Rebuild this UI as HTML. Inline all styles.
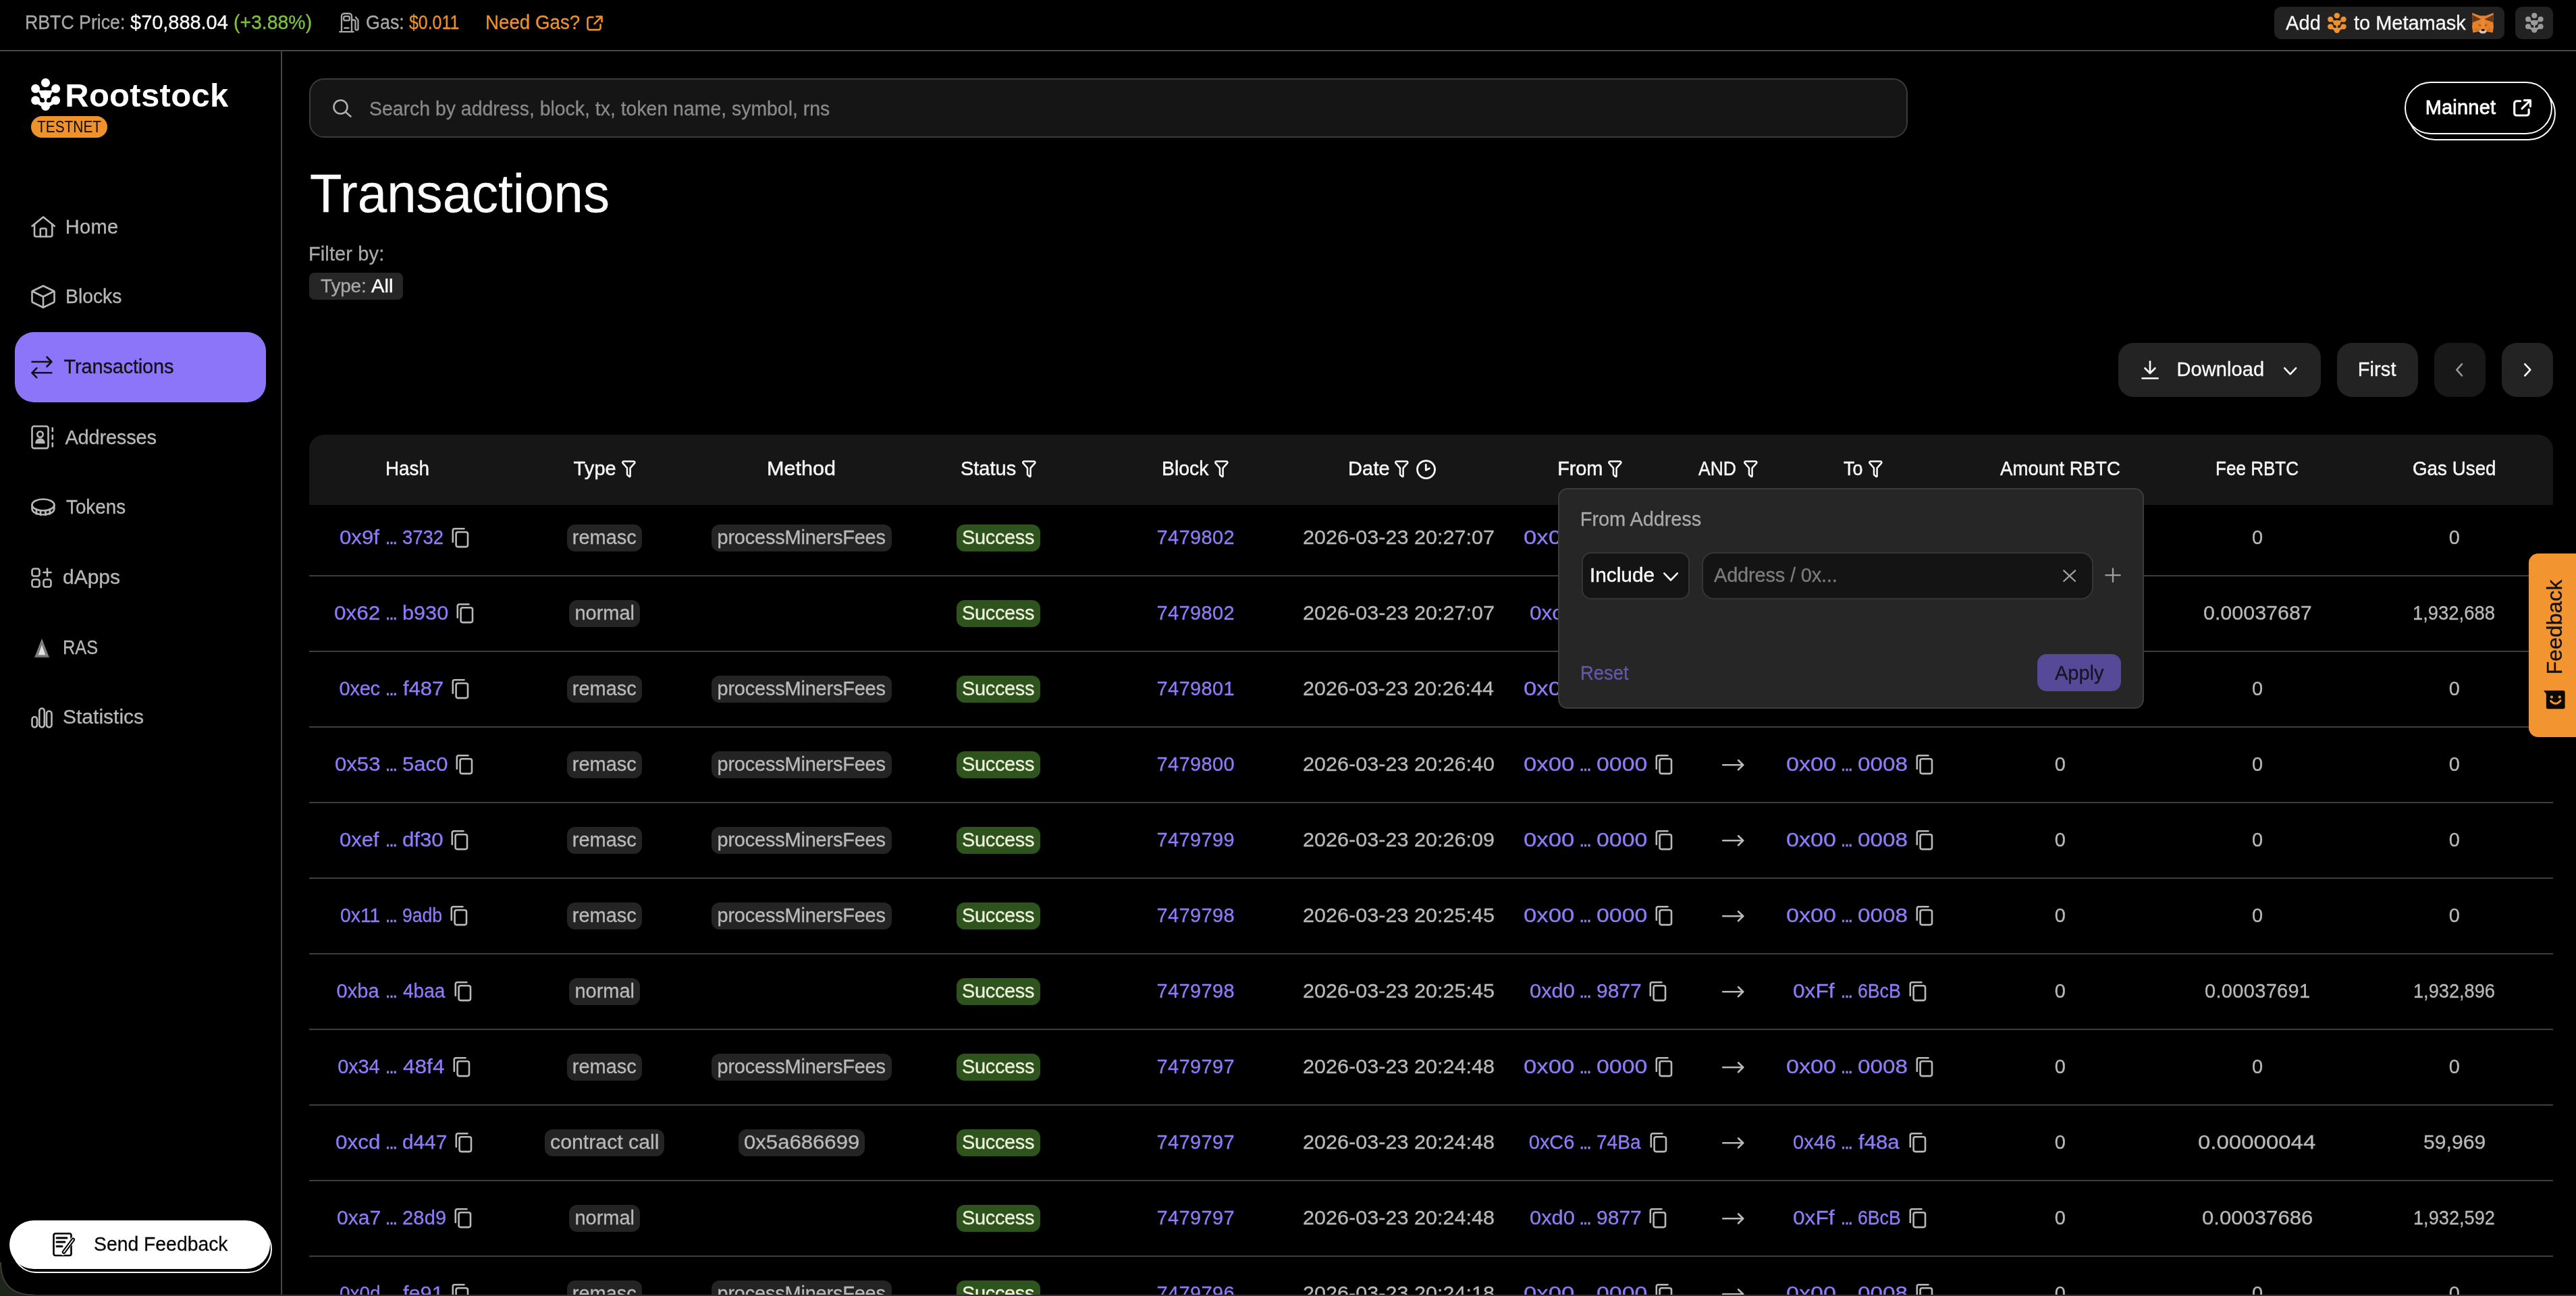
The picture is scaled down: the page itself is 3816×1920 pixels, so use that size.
<!DOCTYPE html>
<html><head><meta charset="utf-8"><title>Transactions</title>
<style>
html,body{margin:0;padding:0;background:#000;width:3816px;height:1920px;overflow:hidden}
body{position:relative;font-family:"Liberation Sans",sans-serif}
#root{position:absolute;left:0;top:0;width:3816px;height:1920px;will-change:transform}
.t{position:absolute;white-space:pre;-webkit-text-stroke:0.3px currentColor}
svg{overflow:visible}
</style></head><body><div id="root">
<div style="position:absolute;left:0px;top:74px;width:3816px;height:2px;background:#464646;border-radius:0px;"></div>
<div class="t" style="left:36.96px;top:19.10px;font-size:29px;line-height:29px;color:#a9a9a9;font-weight:400;letter-spacing:0.000px;transform:scaleX(0.9206);transform-origin:0 0;">RBTC Price:</div>
<div class="t" style="left:193.10px;top:19.10px;font-size:29px;line-height:29px;color:#f7f7f7;font-weight:400;letter-spacing:-0.046px;">$70,888.04</div>
<div class="t" style="left:345.52px;top:19.10px;font-size:29px;line-height:29px;color:#7cc23e;font-weight:400;letter-spacing:0.000px;transform:scaleX(0.9800);transform-origin:0 0;">(+3.88%)</div>
<svg style="position:absolute;left:501.7px;top:19px;" width="30.599999999999966" height="29.5" viewBox="0 0 30.6 29.5" preserveAspectRatio="none"><g fill="none" stroke="#a9a9a9" stroke-width="2.3" stroke-linecap="round" stroke-linejoin="round">
<path d="M4 27.5 V5 a4 4 0 0 1 4 -4 H15 a4 4 0 0 1 4 4 V27.5"/><path d="M1.2 28.2 H21.5"/>
<rect x="7.2" y="5.2" width="8.6" height="6.2" rx="2"/><path d="M8.3 22.5 H14.5"/>
<path d="M19 10.5 H22 a2.5 2.5 0 0 1 2.5 2.5 V23.5 a2 2 0 0 0 4 0 V11 L25 6.5"/>
</g></svg>
<div class="t" style="left:541.57px;top:19.10px;font-size:29px;line-height:29px;color:#a9a9a9;font-weight:400;letter-spacing:0.000px;transform:scaleX(0.9281);transform-origin:0 0;">Gas:</div>
<div class="t" style="left:606.20px;top:19.10px;font-size:29px;line-height:29px;color:#ef9129;font-weight:400;letter-spacing:0.000px;transform:scaleX(0.8581);transform-origin:0 0;">$0.011</div>
<div class="t" style="left:719.39px;top:19.10px;font-size:29px;line-height:29px;color:#ef9129;font-weight:400;letter-spacing:0.000px;transform:scaleX(0.9559);transform-origin:0 0;">Need Gas?</div>
<svg style="position:absolute;left:869px;top:23px;" width="24" height="22.6" viewBox="0 0 24 23" preserveAspectRatio="none"><g fill="none" stroke="#ef9129" stroke-width="2.6" stroke-linecap="round" stroke-linejoin="round"><path d="M9.5 2.5 H4.5 a3 3 0 0 0 -3 3 V18.5 a3 3 0 0 0 3 3 H17.5 a3 3 0 0 0 3 -3 V13.5"/><path d="M14.5 1.5 H22.5 V9.5"/><path d="M22 2 L11.5 12.5"/></g></svg>
<div style="position:absolute;left:3369px;top:10px;width:340.6999999999998px;height:47.9px;background:#222222;border-radius:10px;"></div>
<div class="t" style="left:3386.00px;top:19.50px;font-size:29px;line-height:29px;color:#f7f7f7;font-weight:400;letter-spacing:0.164px;">Add</div>
<svg style="position:absolute;left:3448px;top:19px;" width="28" height="30" viewBox="0 0 43.5 48" preserveAspectRatio="none"><g fill="#f0922c">
<circle cx="21.5" cy="6.6" r="6.6"/><circle cx="6.6" cy="15.3" r="6.5"/><circle cx="36.6" cy="15.3" r="6.5"/>
<circle cx="6.6" cy="32.7" r="6.5"/><circle cx="36.6" cy="32.7" r="6.5"/><circle cx="21.5" cy="41.3" r="6.6"/>
<path d="M10.5 17.6 Q16 18.6 21.5 17.4 Q27 18.6 32.5 17.6 L33 19 Q29 23 28.8 27.5 Q27 30 24.5 31 L21.5 34 L18.5 31 Q16 30 14.2 27.5 Q14 23 10 19 Z"/>
<rect x="20" y="30" width="3" height="8"/>
<path d="M6.6 33 L21.5 41.3 L36.6 33" fill="none" stroke="#f0922c" stroke-width="6.5" stroke-linejoin="round"/>
</g>
<circle cx="16.45" cy="32.4" r="3.3" fill="#222222"/><circle cx="26.6" cy="32.4" r="3.3" fill="#222222"/></svg>
<div class="t" style="left:3487.00px;top:19.50px;font-size:29px;line-height:29px;color:#f7f7f7;font-weight:400;letter-spacing:-0.020px;">to Metamask</div>
<svg style="position:absolute;left:3662px;top:19px;" width="32" height="30" viewBox="0 0 32 30" preserveAspectRatio="none">
<polygon points="0.2,0 11.5,4.3 20.5,4.3 31.8,0 31.3,13.7 32,21 30.5,29.5 22,27.5 16,30.5 10,27.5 1.5,29.5 0,21 0.7,13.7" fill="#e6812b"/>
<polygon points="0.2,2.8 13.1,9.6 1.1,13.9" fill="#683a1b"/>
<polygon points="31.8,2.8 18.4,9.6 30.9,13.9" fill="#683a1b"/>
<polygon points="13,9.6 19,9.6 18.5,24 13.5,24" fill="#ec8a33"/>
<polygon points="7,16 12,17 12.5,20" fill="#c96a25"/><polygon points="25,16 20,17 19.5,20" fill="#c96a25"/>
<polygon points="6,22 11,26 10,27.5 3,26" fill="#d27328"/><polygon points="26,22 21,26 22,27.5 29,26" fill="#d27328"/>
<polygon points="10,27.5 13.2,25 18.8,25 22,27.5 19,30.5 13,30.5" fill="#d8c8b6"/>
<polygon points="13.9,24.1 18.5,24.1 18.5,26.9 13.9,26.9" fill="#111"/>
<ellipse cx="11.8" cy="18.6" rx="1.3" ry="0.8" fill="#3a4a6a"/><ellipse cx="20.2" cy="18.6" rx="1.3" ry="0.8" fill="#3a4a6a"/>
</svg>
<div style="position:absolute;left:3726px;top:10px;width:55.69999999999982px;height:47.9px;background:#222222;border-radius:10px;"></div>
<svg style="position:absolute;left:3740.5px;top:19px;" width="26.90000000000009" height="29.6" viewBox="0 0 43.5 48" preserveAspectRatio="none"><g fill="#9a9a9a">
<circle cx="21.5" cy="6.6" r="6.6"/><circle cx="6.6" cy="15.3" r="6.5"/><circle cx="36.6" cy="15.3" r="6.5"/>
<circle cx="6.6" cy="32.7" r="6.5"/><circle cx="36.6" cy="32.7" r="6.5"/><circle cx="21.5" cy="41.3" r="6.6"/>
<path d="M10.5 17.6 Q16 18.6 21.5 17.4 Q27 18.6 32.5 17.6 L33 19 Q29 23 28.8 27.5 Q27 30 24.5 31 L21.5 34 L18.5 31 Q16 30 14.2 27.5 Q14 23 10 19 Z"/>
<rect x="20" y="30" width="3" height="8"/>
<path d="M6.6 33 L21.5 41.3 L36.6 33" fill="none" stroke="#9a9a9a" stroke-width="6.5" stroke-linejoin="round"/>
</g>
<circle cx="16.45" cy="32.4" r="3.3" fill="#222222"/><circle cx="26.6" cy="32.4" r="3.3" fill="#222222"/></svg>
<div style="position:absolute;left:416px;top:76px;width:2px;height:1844px;background:#464646;border-radius:0px;"></div>
<svg style="position:absolute;left:46px;top:116px;" width="43.5" height="48" viewBox="0 0 43.5 48" preserveAspectRatio="none"><g fill="#ffffff">
<circle cx="21.5" cy="6.6" r="6.6"/><circle cx="6.6" cy="15.3" r="6.5"/><circle cx="36.6" cy="15.3" r="6.5"/>
<circle cx="6.6" cy="32.7" r="6.5"/><circle cx="36.6" cy="32.7" r="6.5"/><circle cx="21.5" cy="41.3" r="6.6"/>
<path d="M10.5 17.6 Q16 18.6 21.5 17.4 Q27 18.6 32.5 17.6 L33 19 Q29 23 28.8 27.5 Q27 30 24.5 31 L21.5 34 L18.5 31 Q16 30 14.2 27.5 Q14 23 10 19 Z"/>
<rect x="20" y="30" width="3" height="8"/>
<path d="M6.6 33 L21.5 41.3 L36.6 33" fill="none" stroke="#ffffff" stroke-width="6.5" stroke-linejoin="round"/>
</g>
<circle cx="16.45" cy="32.4" r="3.3" fill="#000000"/><circle cx="26.6" cy="32.4" r="3.3" fill="#000000"/></svg>
<div class="t" style="left:96.20px;top:116.90px;font-size:49px;line-height:49px;color:#ffffff;font-weight:700;letter-spacing:0.310px;-webkit-text-stroke:0;">Rootstock</div>
<div style="position:absolute;left:46px;top:172px;width:112.69999999999999px;height:31.80000000000001px;background:#f0922c;border-radius:16px;"></div>
<div class="t" style="left:55.00px;top:175.80px;font-size:24px;line-height:24px;color:#0a0a0a;font-weight:400;letter-spacing:0.000px;transform:scaleX(0.8698);transform-origin:0 0;-webkit-text-stroke:0;">TESTNET</div>
<svg style="position:absolute;left:45.7px;top:319.8px;" width="36.3" height="32.099999999999966" viewBox="0 0 36.3 32.1" preserveAspectRatio="none"><g fill="none" stroke="#b8b8b8" stroke-width="2.6" stroke-linecap="round" stroke-linejoin="round"><path d="M1.5 15 L18.1 1.5 L34.8 15"/><path d="M5 12 V28 a2.5 2.5 0 0 0 2.5 2.5 H28.8 a2.5 2.5 0 0 0 2.5 -2.5 V12"/><path d="M13.8 30.5 V20 a1.5 1.5 0 0 1 1.5 -1.5 H21 a1.5 1.5 0 0 1 1.5 1.5 V30.5"/></g></svg>
<div class="t" style="left:96.80px;top:321.70px;font-size:29px;line-height:29px;color:#b8b8b8;font-weight:400;letter-spacing:0.324px;">Home</div>
<svg style="position:absolute;left:46px;top:422px;" width="36" height="35" viewBox="0 0 36.0 35.0" preserveAspectRatio="none"><g fill="none" stroke="#b8b8b8" stroke-width="2.6" stroke-linecap="round" stroke-linejoin="round"><path d="M18 1.5 L33.5 9 a2 2 0 0 1 1 1.8 V24.2 a2 2 0 0 1 -1 1.8 L18 33.5 L2.5 26 a2 2 0 0 1 -1 -1.8 V10.8 a2 2 0 0 1 1 -1.8 Z"/><path d="M2 9.5 L18 17.5 L34 9.5"/><path d="M18 17.5 V33.5"/></g></svg>
<div class="t" style="left:97.05px;top:425.40px;font-size:29px;line-height:29px;color:#b8b8b8;font-weight:400;letter-spacing:0.000px;transform:scaleX(0.9769);transform-origin:0 0;">Blocks</div>
<div style="position:absolute;left:22.2px;top:492px;width:371.6px;height:103.79999999999995px;background:#8c75f8;border-radius:28px;"></div>
<svg style="position:absolute;left:46px;top:526.7px;" width="31.799999999999997" height="34.299999999999955" viewBox="0 0 31.8 34.3" preserveAspectRatio="none"><g fill="none" stroke="#111111" stroke-width="2.6" stroke-linecap="round" stroke-linejoin="round"><path d="M1.5 9 H30"/><path d="M23.5 2 L30.3 9 L23.5 16"/><path d="M30.3 25.3 H1.8"/><path d="M8.3 18.3 L1.5 25.3 L8.3 32.3"/></g></svg>
<div class="t" style="left:94.60px;top:529.00px;font-size:29px;line-height:29px;color:#111111;font-weight:400;letter-spacing:-0.185px;">Transactions</div>
<svg style="position:absolute;left:46px;top:630px;" width="34" height="35.60000000000002" viewBox="0 0 34.0 35.6" preserveAspectRatio="none"><g fill="none" stroke="#b8b8b8" stroke-width="2.6" stroke-linecap="round" stroke-linejoin="round"><rect x="1.5" y="1.5" width="24" height="32.6" rx="3"/><circle cx="13.5" cy="13.5" r="4.2"/><path d="M7.5 26 a6 5.5 0 0 1 12 0 Z" fill="#b8b8b8"/><path d="M31.8 4 V9"/><path d="M31.8 15 V20.5"/><path d="M31.8 26.5 V31.5"/></g></svg>
<div class="t" style="left:96.40px;top:633.80px;font-size:29px;line-height:29px;color:#b8b8b8;font-weight:400;letter-spacing:-0.189px;">Addresses</div>
<svg style="position:absolute;left:46px;top:738px;" width="35.8" height="27" viewBox="0 0 35.8 27.0" preserveAspectRatio="none"><g fill="none" stroke="#b8b8b8" stroke-width="2.6" stroke-linecap="round" stroke-linejoin="round"><ellipse cx="17.9" cy="10" rx="16.4" ry="8.5"/><path d="M1.5 10 V16 a16.4 8.5 0 0 0 32.8 0 V10"/><path d="M8 18 V23.5"/><path d="M14 19.3 V25"/><path d="M21.5 19.3 V25"/><path d="M27.8 18 V23.5"/></g></svg>
<div class="t" style="left:98.30px;top:737.00px;font-size:29px;line-height:29px;color:#b8b8b8;font-weight:400;letter-spacing:0.000px;transform:scaleX(0.9586);transform-origin:0 0;">Tokens</div>
<svg style="position:absolute;left:46px;top:841px;" width="31" height="30" viewBox="0 0 31.0 30.0" preserveAspectRatio="none"><g fill="none" stroke="#b8b8b8" stroke-width="2.6" stroke-linecap="round" stroke-linejoin="round"><rect x="1.5" y="1.5" width="11" height="11" rx="3"/><rect x="1.5" y="17.5" width="11" height="11" rx="3"/><rect x="18.5" y="17.5" width="11" height="11" rx="3"/><path d="M24 1.5 V12.5"/><path d="M18.5 7 H29.5"/></g></svg>
<div class="t" style="left:93.47px;top:841.30px;font-size:29px;line-height:29px;color:#b8b8b8;font-weight:400;letter-spacing:0.000px;transform:scaleX(1.0343);transform-origin:0 0;">dApps</div>
<svg style="position:absolute;left:51px;top:946px;" width="22" height="28" viewBox="0 0 22 28" preserveAspectRatio="none"><polygon points="11,0 22,28 0,28" fill="#6e6e6e"/><polygon points="11,9 16.5,24.5 5.5,24.5" fill="#e0e0e0"/><polygon points="11,3 19,25 3,25" fill="none" stroke="#8a8a8a" stroke-width="1.2"/></svg>
<div class="t" style="left:92.75px;top:945.00px;font-size:29px;line-height:29px;color:#b8b8b8;font-weight:400;letter-spacing:0.000px;transform:scaleX(0.8746);transform-origin:0 0;">RAS</div>
<svg style="position:absolute;left:46px;top:1048px;" width="32" height="31" viewBox="0 0 32.0 31.0" preserveAspectRatio="none"><g fill="none" stroke="#b8b8b8" stroke-width="2.6" stroke-linecap="round" stroke-linejoin="round"><rect x="1.5" y="14" width="7.5" height="15.5" rx="3.7"/><rect x="12.3" y="1.5" width="7.5" height="28" rx="3.7"/><rect x="23" y="5.5" width="7.5" height="24" rx="3.7"/></g></svg>
<div class="t" style="left:93.47px;top:1048.40px;font-size:29px;line-height:29px;color:#b8b8b8;font-weight:400;letter-spacing:0.000px;transform:scaleX(1.0347);transform-origin:0 0;">Statistics</div>
<div style="position:absolute;left:17.5px;top:1815px;width:385px;height:71px;border-radius:36px;background:#000;border:2px solid #fff;box-sizing:border-box"></div>
<div style="position:absolute;left:13.9px;top:1807.7px;width:386.40000000000003px;height:72.09999999999991px;background:#ffffff;border-radius:36px;"></div>
<svg style="position:absolute;left:78px;top:1826px;" width="32" height="35.5" viewBox="0 0 32 35.5" preserveAspectRatio="none"><g fill="none" stroke="#000" stroke-width="2.6" stroke-linecap="round" stroke-linejoin="round"><rect x="1.5" y="1.5" width="26" height="32.5" rx="2.5"/></g><g stroke="#000" stroke-width="3" stroke-linecap="round"><path d="M6 8 H21"/><path d="M6 14 H18"/><path d="M6 20.5 H14"/></g><path d="M30.5 10 L15 30" stroke="#fff" stroke-width="7" stroke-linecap="round"/><path d="M30.3 10.5 L16.5 29" stroke="#000" stroke-width="5.5" stroke-linecap="round"/><path d="M30.3 10.5 L16.5 29" stroke="#fff" stroke-width="1.6" stroke-linecap="round"/></svg>
<div class="t" style="left:139.02px;top:1829.00px;font-size:29px;line-height:29px;color:#0a0a0a;font-weight:400;letter-spacing:0.000px;transform:scaleX(0.9771);transform-origin:0 0;">Send Feedback</div>
<div style="position:absolute;left:458px;top:116.2px;width:2367.7px;height:87.5px;border-radius:22px;background:#151515;border:2px solid #3a3a3a;box-sizing:border-box"></div>
<svg style="position:absolute;left:493.4px;top:146.6px;" width="28.0" height="27.0" viewBox="0 0 28 27" preserveAspectRatio="none"><g fill="none" stroke="#b0b0b0" stroke-width="2.6" stroke-linecap="round"><circle cx="11.5" cy="11.5" r="10"/><path d="M19 19 L26.5 25.5"/></g></svg>
<div class="t" style="left:547.02px;top:146.80px;font-size:29px;line-height:29px;color:#8a8a8a;font-weight:400;letter-spacing:0.000px;transform:scaleX(0.9798);transform-origin:0 0;">Search by address, block, tx, token name, symbol, rns</div>
<div style="position:absolute;left:3567px;top:128px;width:218.6px;height:79.7px;border-radius:40px;border:2.5px solid #fff;box-sizing:border-box"></div>
<div style="position:absolute;left:3562.4px;top:120.8px;width:218.5px;height:78.5px;border-radius:40px;background:#000;border:2.5px solid #fff;box-sizing:border-box"></div>
<div class="t" style="left:3592.70px;top:145.40px;font-size:29px;line-height:29px;color:#ffffff;font-weight:400;letter-spacing:0.198px;-webkit-text-stroke:0.8px currentColor;">Mainnet</div>
<svg style="position:absolute;left:3722.7px;top:147px;" width="27.100000000000364" height="25.69999999999999" viewBox="0 0 24 23" preserveAspectRatio="none"><g fill="none" stroke="#ffffff" stroke-width="2.8" stroke-linecap="round" stroke-linejoin="round"><path d="M9.5 2.5 H4.5 a3 3 0 0 0 -3 3 V18.5 a3 3 0 0 0 3 3 H17.5 a3 3 0 0 0 3 -3 V13.5"/><path d="M14.5 1.5 H22.5 V9.5"/><path d="M22 2 L11.5 12.5"/></g></svg>
<div class="t" style="left:458.52px;top:247.30px;font-size:80px;line-height:80px;color:#fafafa;font-weight:400;letter-spacing:0.000px;transform:scaleX(0.9757);transform-origin:0 0;">Transactions</div>
<div class="t" style="left:456.90px;top:361.70px;font-size:29px;line-height:29px;color:#a9a9a9;font-weight:400;letter-spacing:0.130px;">Filter by:</div>
<div style="position:absolute;left:458px;top:404px;width:138.70000000000005px;height:39.80000000000001px;background:#262626;border-radius:8px;"></div>
<div class="t" style="left:475.00px;top:409.90px;font-size:28px;line-height:28px;color:#a9a9a9;font-weight:400;letter-spacing:-0.176px;">Type:</div>
<div class="t" style="left:549.50px;top:409.90px;font-size:28px;line-height:28px;color:#ffffff;font-weight:400;letter-spacing:0.000px;transform:scaleX(1.0403);transform-origin:0 0;-webkit-text-stroke:0.45px currentColor;">All</div>
<div style="position:absolute;left:3138px;top:507.8px;width:299.6999999999998px;height:79.99999999999994px;background:#232323;border-radius:22px;"></div>
<svg style="position:absolute;left:3171.7px;top:534px;" width="26.100000000000364" height="28" viewBox="0 0 26.1 28" preserveAspectRatio="none"><g fill="none" stroke="#fff" stroke-width="2.6" stroke-linecap="round" stroke-linejoin="round"><path d="M13 1.5 V19"/><path d="M5.5 11.5 L13 19 L20.5 11.5"/><path d="M1.5 26.5 H24.6"/></g></svg>
<div class="t" style="left:3224.50px;top:533.00px;font-size:29px;line-height:29px;color:#fafafa;font-weight:400;letter-spacing:0.080px;">Download</div>
<svg style="position:absolute;left:3383px;top:544px;" width="19.40000000000009" height="11.600000000000023" viewBox="0 0 19.4 11.6" preserveAspectRatio="none"><path d="M1.3 1.3 L9.7 10.3 L18.1 1.3" fill="none" stroke="#fafafa" stroke-width="2.6" stroke-linecap="round" stroke-linejoin="round"/></svg>
<div style="position:absolute;left:3461.9px;top:507.8px;width:119.79999999999973px;height:79.99999999999994px;background:#232323;border-radius:22px;"></div>
<div class="t" style="left:3492.70px;top:533.00px;font-size:29px;line-height:29px;color:#fafafa;font-weight:400;letter-spacing:0.096px;">First</div>
<div style="position:absolute;left:3605.8px;top:507.8px;width:75.89999999999964px;height:79.99999999999994px;background:#181818;border-radius:22px;"></div>
<svg style="position:absolute;left:3637.8px;top:538px;" width="10.199999999999818" height="19.799999999999955" viewBox="0 0 10.2 19.8" preserveAspectRatio="none"><path d="M9 1.3 L1.3 9.9 L9 18.5" fill="none" stroke="#9a9a9a" stroke-width="2.6" stroke-linecap="round" stroke-linejoin="round"/></svg>
<div style="position:absolute;left:3705.9px;top:507.8px;width:75.90000000000009px;height:79.99999999999994px;background:#232323;border-radius:22px;"></div>
<svg style="position:absolute;left:3739px;top:538px;" width="10.800000000000182" height="19.799999999999955" viewBox="0 0 10.8 19.8" preserveAspectRatio="none"><path d="M1.3 1.3 L9.3 9.9 L1.3 18.5" fill="none" stroke="#fafafa" stroke-width="2.6" stroke-linecap="round" stroke-linejoin="round"/></svg>
<div style="position:absolute;left:458px;top:643.7px;width:3323.6px;height:104px;border-radius:22px 22px 0 0;background:#161616"></div>
<div class="t" style="left:571.48px;top:680.00px;font-size:29px;line-height:29px;color:#f7f7f7;font-weight:400;letter-spacing:0.000px;transform:scaleX(0.9586);transform-origin:0 0;-webkit-text-stroke:0.45px currentColor;">Hash</div>
<div class="t" style="left:849.60px;top:680.00px;font-size:29px;line-height:29px;color:#f7f7f7;font-weight:400;letter-spacing:0.086px;-webkit-text-stroke:0.45px currentColor;">Type</div>
<svg style="position:absolute;left:921.1px;top:682px;" width="20.700000000000045" height="26" viewBox="0 0 20.7 26" preserveAspectRatio="none"><path d="M2.8 1.5 H17.9 a1.6 1.6 0 0 1 1.2 2.6 L12.6 11.3 V23.5 a0.8 0.8 0 0 1 -1.3 0.6 L8.6 21.8 a1.6 1.6 0 0 1 -0.6 -1.2 V11.3 L1.6 4.1 a1.6 1.6 0 0 1 1.2 -2.6 Z" fill="none" stroke="#fafafa" stroke-width="2.5" stroke-linejoin="round"/></svg>
<div class="t" style="left:1136.19px;top:680.00px;font-size:29px;line-height:29px;color:#f7f7f7;font-weight:400;letter-spacing:0.000px;transform:scaleX(1.0545);transform-origin:0 0;-webkit-text-stroke:0.45px currentColor;">Method</div>
<div class="t" style="left:1422.90px;top:680.00px;font-size:29px;line-height:29px;color:#f7f7f7;font-weight:400;letter-spacing:0.037px;-webkit-text-stroke:0.45px currentColor;">Status</div>
<svg style="position:absolute;left:1513.5px;top:682px;" width="20.700000000000045" height="26" viewBox="0 0 20.7 26" preserveAspectRatio="none"><path d="M2.8 1.5 H17.9 a1.6 1.6 0 0 1 1.2 2.6 L12.6 11.3 V23.5 a0.8 0.8 0 0 1 -1.3 0.6 L8.6 21.8 a1.6 1.6 0 0 1 -0.6 -1.2 V11.3 L1.6 4.1 a1.6 1.6 0 0 1 1.2 -2.6 Z" fill="none" stroke="#fafafa" stroke-width="2.5" stroke-linejoin="round"/></svg>
<div class="t" style="left:1720.64px;top:680.00px;font-size:29px;line-height:29px;color:#f7f7f7;font-weight:400;letter-spacing:0.000px;transform:scaleX(0.9796);transform-origin:0 0;-webkit-text-stroke:0.45px currentColor;">Block</div>
<svg style="position:absolute;left:1799.3px;top:682px;" width="20.700000000000045" height="26" viewBox="0 0 20.7 26" preserveAspectRatio="none"><path d="M2.8 1.5 H17.9 a1.6 1.6 0 0 1 1.2 2.6 L12.6 11.3 V23.5 a0.8 0.8 0 0 1 -1.3 0.6 L8.6 21.8 a1.6 1.6 0 0 1 -0.6 -1.2 V11.3 L1.6 4.1 a1.6 1.6 0 0 1 1.2 -2.6 Z" fill="none" stroke="#fafafa" stroke-width="2.5" stroke-linejoin="round"/></svg>
<div class="t" style="left:1997.00px;top:680.00px;font-size:29px;line-height:29px;color:#f7f7f7;font-weight:400;letter-spacing:0.157px;-webkit-text-stroke:0.45px currentColor;">Date</div>
<svg style="position:absolute;left:2066px;top:682px;" width="20.699999999999818" height="26" viewBox="0 0 20.7 26" preserveAspectRatio="none"><path d="M2.8 1.5 H17.9 a1.6 1.6 0 0 1 1.2 2.6 L12.6 11.3 V23.5 a0.8 0.8 0 0 1 -1.3 0.6 L8.6 21.8 a1.6 1.6 0 0 1 -0.6 -1.2 V11.3 L1.6 4.1 a1.6 1.6 0 0 1 1.2 -2.6 Z" fill="none" stroke="#fafafa" stroke-width="2.5" stroke-linejoin="round"/></svg>
<svg style="position:absolute;left:2098.3px;top:680.5px;" width="29.09999999999991" height="29.100000000000023" viewBox="0 0 29.1 29.1" preserveAspectRatio="none"><g fill="none" stroke="#fafafa" stroke-width="2.8" stroke-linecap="round" stroke-linejoin="round"><circle cx="14.55" cy="14.55" r="13"/><path d="M14.3 7.5 V15.5 L19.5 13"/></g></svg>
<div class="t" style="left:2307.20px;top:680.00px;font-size:29px;line-height:29px;color:#f7f7f7;font-weight:400;letter-spacing:-0.167px;-webkit-text-stroke:0.45px currentColor;">From</div>
<svg style="position:absolute;left:2382px;top:682px;" width="20.699999999999818" height="26" viewBox="0 0 20.7 26" preserveAspectRatio="none"><path d="M2.8 1.5 H17.9 a1.6 1.6 0 0 1 1.2 2.6 L12.6 11.3 V23.5 a0.8 0.8 0 0 1 -1.3 0.6 L8.6 21.8 a1.6 1.6 0 0 1 -0.6 -1.2 V11.3 L1.6 4.1 a1.6 1.6 0 0 1 1.2 -2.6 Z" fill="none" stroke="#fafafa" stroke-width="2.5" stroke-linejoin="round"/></svg>
<div class="t" style="left:2515.50px;top:680.00px;font-size:29px;line-height:29px;color:#f7f7f7;font-weight:400;letter-spacing:0.000px;transform:scaleX(0.9140);transform-origin:0 0;-webkit-text-stroke:0.45px currentColor;">AND</div>
<svg style="position:absolute;left:2583px;top:682px;" width="20.699999999999818" height="26" viewBox="0 0 20.7 26" preserveAspectRatio="none"><path d="M2.8 1.5 H17.9 a1.6 1.6 0 0 1 1.2 2.6 L12.6 11.3 V23.5 a0.8 0.8 0 0 1 -1.3 0.6 L8.6 21.8 a1.6 1.6 0 0 1 -0.6 -1.2 V11.3 L1.6 4.1 a1.6 1.6 0 0 1 1.2 -2.6 Z" fill="none" stroke="#fafafa" stroke-width="2.5" stroke-linejoin="round"/></svg>
<div class="t" style="left:2731.00px;top:680.00px;font-size:29px;line-height:29px;color:#f7f7f7;font-weight:400;letter-spacing:0.000px;transform:scaleX(0.9254);transform-origin:0 0;-webkit-text-stroke:0.45px currentColor;">To</div>
<svg style="position:absolute;left:2768px;top:682px;" width="20.699999999999818" height="26" viewBox="0 0 20.7 26" preserveAspectRatio="none"><path d="M2.8 1.5 H17.9 a1.6 1.6 0 0 1 1.2 2.6 L12.6 11.3 V23.5 a0.8 0.8 0 0 1 -1.3 0.6 L8.6 21.8 a1.6 1.6 0 0 1 -0.6 -1.2 V11.3 L1.6 4.1 a1.6 1.6 0 0 1 1.2 -2.6 Z" fill="none" stroke="#fafafa" stroke-width="2.5" stroke-linejoin="round"/></svg>
<div class="t" style="left:2963.00px;top:680.00px;font-size:29px;line-height:29px;color:#f7f7f7;font-weight:400;letter-spacing:0.000px;transform:scaleX(0.9516);transform-origin:0 0;-webkit-text-stroke:0.45px currentColor;">Amount RBTC</div>
<div class="t" style="left:3281.60px;top:680.00px;font-size:29px;line-height:29px;color:#f7f7f7;font-weight:400;letter-spacing:0.000px;transform:scaleX(0.8983);transform-origin:0 0;-webkit-text-stroke:0.45px currentColor;">Fee RBTC</div>
<div class="t" style="left:3573.94px;top:680.00px;font-size:29px;line-height:29px;color:#f7f7f7;font-weight:400;letter-spacing:0.000px;transform:scaleX(0.9581);transform-origin:0 0;-webkit-text-stroke:0.45px currentColor;">Gas Used</div>
<div style="position:absolute;left:458px;top:852px;width:3323.7px;height:2px;background:#3d3d3d;border-radius:0px;"></div>
<div class="t" style="left:502.52px;top:782.00px;font-size:29px;line-height:29px;color:#8f7cf8;font-weight:400;letter-spacing:0.000px;transform:scaleX(1.0766);transform-origin:0 0;">0x9f</div>
<div class="t" style="left:570.55px;top:782.00px;font-size:29px;line-height:29px;color:#8f7cf8;font-weight:400;letter-spacing:-2.707px;">...</div>
<div class="t" style="left:596.11px;top:782.00px;font-size:29px;line-height:29px;color:#8f7cf8;font-weight:400;letter-spacing:0.000px;transform:scaleX(0.9449);transform-origin:0 0;">3732</div>
<svg style="position:absolute;left:669.0px;top:782.1999999999999px;" width="25.399999999999977" height="29.399999999999977" viewBox="0 0 25.4 29.4" preserveAspectRatio="none"><g fill="none" stroke="#b9b9b9" stroke-width="2.6" stroke-linecap="round" stroke-linejoin="round"><path d="M1.8 21 V3.8 a2.5 2.5 0 0 1 2.5 -2.5 H18.5"/><rect x="6.6" y="6.3" width="17.4" height="21.8" rx="2.8"/></g></svg>
<div style="position:absolute;left:839.6px;top:776.9px;width:111.79999999999995px;height:40.0px;background:#242424;border-radius:12px;"></div>
<div class="t" style="left:847.80px;top:782.00px;font-size:29px;line-height:29px;color:#b9b9b9;font-weight:400;letter-spacing:-0.034px;">remasc</div>
<div style="position:absolute;left:1054.3px;top:776.9px;width:266.4000000000001px;height:40.0px;background:#242424;border-radius:12px;"></div>
<div class="t" style="left:1062.50px;top:782.00px;font-size:29px;line-height:29px;color:#b9b9b9;font-weight:400;letter-spacing:-0.220px;">processMinersFees</div>
<div style="position:absolute;left:1416.9px;top:776.9px;width:124.0px;height:40.0px;background:#2e531c;border-radius:12px;"></div>
<div class="t" style="left:1425.00px;top:782.00px;font-size:29px;line-height:29px;color:#eef2dd;font-weight:400;letter-spacing:-0.350px;">Success</div>
<div class="t" style="left:1713.60px;top:782.00px;font-size:29px;line-height:29px;color:#8f7cf8;font-weight:400;letter-spacing:0.338px;">7479802</div>
<div class="t" style="left:1930.05px;top:782.00px;font-size:29px;line-height:29px;color:#b9b9b9;font-weight:400;letter-spacing:0.000px;transform:scaleX(1.0548);transform-origin:0 0;">2026-03-23 20:27:07</div>
<div class="t" style="left:2257.25px;top:782.00px;font-size:29px;line-height:29px;color:#8f7cf8;font-weight:400;letter-spacing:0.000px;transform:scaleX(1.1982);transform-origin:0 0;">0x00</div>
<div class="t" style="left:2339.25px;top:782.00px;font-size:29px;line-height:29px;color:#8f7cf8;font-weight:400;letter-spacing:-2.707px;">...</div>
<div class="t" style="left:2364.58px;top:782.00px;font-size:29px;line-height:29px;color:#8f7cf8;font-weight:400;letter-spacing:0.000px;transform:scaleX(1.1669);transform-origin:0 0;">0000</div>
<svg style="position:absolute;left:2451.5499999999997px;top:782.1999999999999px;" width="25.40000000000009" height="29.399999999999977" viewBox="0 0 25.4 29.4" preserveAspectRatio="none"><g fill="none" stroke="#b9b9b9" stroke-width="2.6" stroke-linecap="round" stroke-linejoin="round"><path d="M1.8 21 V3.8 a2.5 2.5 0 0 1 2.5 -2.5 H18.5"/><rect x="6.6" y="6.3" width="17.4" height="21.8" rx="2.8"/></g></svg>
<svg style="position:absolute;left:2551px;top:789.0px;" width="32.5" height="16.5" viewBox="0 0 32.5 16.5" preserveAspectRatio="none"><g fill="none" stroke="#b9b9b9" stroke-width="2.6" stroke-linecap="round" stroke-linejoin="round"><path d="M1.3 8.3 H31"/><path d="M24 1.3 L31.2 8.3 L24 15.3"/></g></svg>
<div class="t" style="left:2645.82px;top:782.00px;font-size:29px;line-height:29px;color:#8f7cf8;font-weight:400;letter-spacing:0.000px;transform:scaleX(1.1776);transform-origin:0 0;">0x00</div>
<div class="t" style="left:2726.55px;top:782.00px;font-size:29px;line-height:29px;color:#8f7cf8;font-weight:400;letter-spacing:-2.707px;">...</div>
<div class="t" style="left:2751.90px;top:782.00px;font-size:29px;line-height:29px;color:#8f7cf8;font-weight:400;letter-spacing:0.000px;transform:scaleX(1.1469);transform-origin:0 0;">0008</div>
<svg style="position:absolute;left:2837.6px;top:782.1999999999999px;" width="25.40000000000009" height="29.399999999999977" viewBox="0 0 25.4 29.4" preserveAspectRatio="none"><g fill="none" stroke="#b9b9b9" stroke-width="2.6" stroke-linecap="round" stroke-linejoin="round"><path d="M1.8 21 V3.8 a2.5 2.5 0 0 1 2.5 -2.5 H18.5"/><rect x="6.6" y="6.3" width="17.4" height="21.8" rx="2.8"/></g></svg>
<div class="t" style="left:3043.80px;top:782.00px;font-size:29px;line-height:29px;color:#b9b9b9;font-weight:400;letter-spacing:0.000px;">0</div>
<div class="t" style="left:3336.00px;top:782.00px;font-size:29px;line-height:29px;color:#b9b9b9;font-weight:400;letter-spacing:0.000px;">0</div>
<div class="t" style="left:3627.80px;top:782.00px;font-size:29px;line-height:29px;color:#b9b9b9;font-weight:400;letter-spacing:0.000px;">0</div>
<div style="position:absolute;left:458px;top:964px;width:3323.7px;height:2px;background:#3d3d3d;border-radius:0px;"></div>
<div class="t" style="left:495.46px;top:894.00px;font-size:29px;line-height:29px;color:#8f7cf8;font-weight:400;letter-spacing:0.000px;transform:scaleX(1.0863);transform-origin:0 0;">0x62</div>
<div class="t" style="left:570.55px;top:894.00px;font-size:29px;line-height:29px;color:#8f7cf8;font-weight:400;letter-spacing:-2.707px;">...</div>
<div class="t" style="left:595.99px;top:894.00px;font-size:29px;line-height:29px;color:#8f7cf8;font-weight:400;letter-spacing:0.000px;transform:scaleX(1.0579);transform-origin:0 0;">b930</div>
<svg style="position:absolute;left:676.05px;top:894.1999999999999px;" width="25.399999999999977" height="29.399999999999977" viewBox="0 0 25.4 29.4" preserveAspectRatio="none"><g fill="none" stroke="#b9b9b9" stroke-width="2.6" stroke-linecap="round" stroke-linejoin="round"><path d="M1.8 21 V3.8 a2.5 2.5 0 0 1 2.5 -2.5 H18.5"/><rect x="6.6" y="6.3" width="17.4" height="21.8" rx="2.8"/></g></svg>
<div style="position:absolute;left:843.25px;top:888.9px;width:104.5px;height:40.0px;background:#242424;border-radius:12px;"></div>
<div class="t" style="left:851.50px;top:894.00px;font-size:29px;line-height:29px;color:#b9b9b9;font-weight:400;letter-spacing:-0.040px;">normal</div>
<div style="position:absolute;left:1416.9px;top:888.9px;width:124.0px;height:40.0px;background:#2e531c;border-radius:12px;"></div>
<div class="t" style="left:1425.00px;top:894.00px;font-size:29px;line-height:29px;color:#eef2dd;font-weight:400;letter-spacing:-0.350px;">Success</div>
<div class="t" style="left:1713.60px;top:894.00px;font-size:29px;line-height:29px;color:#8f7cf8;font-weight:400;letter-spacing:0.338px;">7479802</div>
<div class="t" style="left:1930.05px;top:894.00px;font-size:29px;line-height:29px;color:#b9b9b9;font-weight:400;letter-spacing:0.000px;transform:scaleX(1.0548);transform-origin:0 0;">2026-03-23 20:27:07</div>
<div class="t" style="left:2265.91px;top:894.00px;font-size:29px;line-height:29px;color:#8f7cf8;font-weight:400;letter-spacing:0.000px;transform:scaleX(1.0866);transform-origin:0 0;">0xc6</div>
<div class="t" style="left:2339.25px;top:894.00px;font-size:29px;line-height:29px;color:#8f7cf8;font-weight:400;letter-spacing:-2.707px;">...</div>
<div class="t" style="left:2364.72px;top:894.00px;font-size:29px;line-height:29px;color:#8f7cf8;font-weight:400;letter-spacing:0.000px;transform:scaleX(1.0299);transform-origin:0 0;">9877</div>
<svg style="position:absolute;left:2443.0px;top:894.1999999999999px;" width="25.40000000000009" height="29.399999999999977" viewBox="0 0 25.4 29.4" preserveAspectRatio="none"><g fill="none" stroke="#b9b9b9" stroke-width="2.6" stroke-linecap="round" stroke-linejoin="round"><path d="M1.8 21 V3.8 a2.5 2.5 0 0 1 2.5 -2.5 H18.5"/><rect x="6.6" y="6.3" width="17.4" height="21.8" rx="2.8"/></g></svg>
<svg style="position:absolute;left:2551px;top:901.0px;" width="32.5" height="16.5" viewBox="0 0 32.5 16.5" preserveAspectRatio="none"><g fill="none" stroke="#b9b9b9" stroke-width="2.6" stroke-linecap="round" stroke-linejoin="round"><path d="M1.3 8.3 H31"/><path d="M24 1.3 L31.2 8.3 L24 15.3"/></g></svg>
<div class="t" style="left:2655.91px;top:894.00px;font-size:29px;line-height:29px;color:#8f7cf8;font-weight:400;letter-spacing:0.000px;transform:scaleX(1.0924);transform-origin:0 0;">0xFf</div>
<div class="t" style="left:2726.55px;top:894.00px;font-size:29px;line-height:29px;color:#8f7cf8;font-weight:400;letter-spacing:-2.707px;">...</div>
<div class="t" style="left:2752.13px;top:894.00px;font-size:29px;line-height:29px;color:#8f7cf8;font-weight:400;letter-spacing:0.000px;transform:scaleX(0.9191);transform-origin:0 0;">6BcB</div>
<svg style="position:absolute;left:2827.6px;top:894.1999999999999px;" width="25.40000000000009" height="29.399999999999977" viewBox="0 0 25.4 29.4" preserveAspectRatio="none"><g fill="none" stroke="#b9b9b9" stroke-width="2.6" stroke-linecap="round" stroke-linejoin="round"><path d="M1.8 21 V3.8 a2.5 2.5 0 0 1 2.5 -2.5 H18.5"/><rect x="6.6" y="6.3" width="17.4" height="21.8" rx="2.8"/></g></svg>
<div class="t" style="left:3043.80px;top:894.00px;font-size:29px;line-height:29px;color:#b9b9b9;font-weight:400;letter-spacing:0.000px;">0</div>
<div class="t" style="left:3263.70px;top:894.00px;font-size:29px;line-height:29px;color:#b9b9b9;font-weight:400;letter-spacing:0.000px;transform:scaleX(1.0491);transform-origin:0 0;">0.00037687</div>
<div class="t" style="left:3574.41px;top:894.00px;font-size:29px;line-height:29px;color:#b9b9b9;font-weight:400;letter-spacing:0.000px;transform:scaleX(0.9453);transform-origin:0 0;">1,932,688</div>
<div style="position:absolute;left:458px;top:1076px;width:3323.7px;height:2px;background:#3d3d3d;border-radius:0px;"></div>
<div class="t" style="left:502.55px;top:1006.00px;font-size:29px;line-height:29px;color:#8f7cf8;font-weight:400;letter-spacing:-0.252px;">0xec</div>
<div class="t" style="left:570.55px;top:1006.00px;font-size:29px;line-height:29px;color:#8f7cf8;font-weight:400;letter-spacing:-2.707px;">...</div>
<div class="t" style="left:597.05px;top:1006.00px;font-size:29px;line-height:29px;color:#8f7cf8;font-weight:400;letter-spacing:0.000px;transform:scaleX(1.0666);transform-origin:0 0;">f487</div>
<svg style="position:absolute;left:669.05px;top:1006.1999999999999px;" width="25.399999999999977" height="29.399999999999977" viewBox="0 0 25.4 29.4" preserveAspectRatio="none"><g fill="none" stroke="#b9b9b9" stroke-width="2.6" stroke-linecap="round" stroke-linejoin="round"><path d="M1.8 21 V3.8 a2.5 2.5 0 0 1 2.5 -2.5 H18.5"/><rect x="6.6" y="6.3" width="17.4" height="21.8" rx="2.8"/></g></svg>
<div style="position:absolute;left:839.6px;top:1000.9px;width:111.79999999999995px;height:40.000000000000114px;background:#242424;border-radius:12px;"></div>
<div class="t" style="left:847.80px;top:1006.00px;font-size:29px;line-height:29px;color:#b9b9b9;font-weight:400;letter-spacing:-0.034px;">remasc</div>
<div style="position:absolute;left:1054.3px;top:1000.9px;width:266.4000000000001px;height:40.000000000000114px;background:#242424;border-radius:12px;"></div>
<div class="t" style="left:1062.50px;top:1006.00px;font-size:29px;line-height:29px;color:#b9b9b9;font-weight:400;letter-spacing:-0.220px;">processMinersFees</div>
<div style="position:absolute;left:1416.9px;top:1000.9px;width:124.0px;height:40.000000000000114px;background:#2e531c;border-radius:12px;"></div>
<div class="t" style="left:1425.00px;top:1006.00px;font-size:29px;line-height:29px;color:#eef2dd;font-weight:400;letter-spacing:-0.350px;">Success</div>
<div class="t" style="left:1713.60px;top:1006.00px;font-size:29px;line-height:29px;color:#8f7cf8;font-weight:400;letter-spacing:0.338px;">7479801</div>
<div class="t" style="left:1930.05px;top:1006.00px;font-size:29px;line-height:29px;color:#b9b9b9;font-weight:400;letter-spacing:0.000px;transform:scaleX(1.0509);transform-origin:0 0;">2026-03-23 20:26:44</div>
<div class="t" style="left:2257.25px;top:1006.00px;font-size:29px;line-height:29px;color:#8f7cf8;font-weight:400;letter-spacing:0.000px;transform:scaleX(1.1982);transform-origin:0 0;">0x00</div>
<div class="t" style="left:2339.25px;top:1006.00px;font-size:29px;line-height:29px;color:#8f7cf8;font-weight:400;letter-spacing:-2.707px;">...</div>
<div class="t" style="left:2364.58px;top:1006.00px;font-size:29px;line-height:29px;color:#8f7cf8;font-weight:400;letter-spacing:0.000px;transform:scaleX(1.1669);transform-origin:0 0;">0000</div>
<svg style="position:absolute;left:2451.5499999999997px;top:1006.1999999999999px;" width="25.40000000000009" height="29.399999999999977" viewBox="0 0 25.4 29.4" preserveAspectRatio="none"><g fill="none" stroke="#b9b9b9" stroke-width="2.6" stroke-linecap="round" stroke-linejoin="round"><path d="M1.8 21 V3.8 a2.5 2.5 0 0 1 2.5 -2.5 H18.5"/><rect x="6.6" y="6.3" width="17.4" height="21.8" rx="2.8"/></g></svg>
<svg style="position:absolute;left:2551px;top:1013.0px;" width="32.5" height="16.5" viewBox="0 0 32.5 16.5" preserveAspectRatio="none"><g fill="none" stroke="#b9b9b9" stroke-width="2.6" stroke-linecap="round" stroke-linejoin="round"><path d="M1.3 8.3 H31"/><path d="M24 1.3 L31.2 8.3 L24 15.3"/></g></svg>
<div class="t" style="left:2645.82px;top:1006.00px;font-size:29px;line-height:29px;color:#8f7cf8;font-weight:400;letter-spacing:0.000px;transform:scaleX(1.1776);transform-origin:0 0;">0x00</div>
<div class="t" style="left:2726.55px;top:1006.00px;font-size:29px;line-height:29px;color:#8f7cf8;font-weight:400;letter-spacing:-2.707px;">...</div>
<div class="t" style="left:2751.90px;top:1006.00px;font-size:29px;line-height:29px;color:#8f7cf8;font-weight:400;letter-spacing:0.000px;transform:scaleX(1.1469);transform-origin:0 0;">0008</div>
<svg style="position:absolute;left:2837.6px;top:1006.1999999999999px;" width="25.40000000000009" height="29.399999999999977" viewBox="0 0 25.4 29.4" preserveAspectRatio="none"><g fill="none" stroke="#b9b9b9" stroke-width="2.6" stroke-linecap="round" stroke-linejoin="round"><path d="M1.8 21 V3.8 a2.5 2.5 0 0 1 2.5 -2.5 H18.5"/><rect x="6.6" y="6.3" width="17.4" height="21.8" rx="2.8"/></g></svg>
<div class="t" style="left:3043.80px;top:1006.00px;font-size:29px;line-height:29px;color:#b9b9b9;font-weight:400;letter-spacing:0.000px;">0</div>
<div class="t" style="left:3336.00px;top:1006.00px;font-size:29px;line-height:29px;color:#b9b9b9;font-weight:400;letter-spacing:0.000px;">0</div>
<div class="t" style="left:3627.80px;top:1006.00px;font-size:29px;line-height:29px;color:#b9b9b9;font-weight:400;letter-spacing:0.000px;">0</div>
<div style="position:absolute;left:458px;top:1188px;width:3323.7px;height:2px;background:#3d3d3d;border-radius:0px;"></div>
<div class="t" style="left:496.28px;top:1118.00px;font-size:29px;line-height:29px;color:#8f7cf8;font-weight:400;letter-spacing:0.000px;transform:scaleX(1.0731);transform-origin:0 0;">0x53</div>
<div class="t" style="left:570.55px;top:1118.00px;font-size:29px;line-height:29px;color:#8f7cf8;font-weight:400;letter-spacing:-2.707px;">...</div>
<div class="t" style="left:595.98px;top:1118.00px;font-size:29px;line-height:29px;color:#8f7cf8;font-weight:400;letter-spacing:0.000px;transform:scaleX(1.0731);transform-origin:0 0;">5ac0</div>
<svg style="position:absolute;left:675.25px;top:1118.2px;" width="25.399999999999977" height="29.40000000000009" viewBox="0 0 25.4 29.4" preserveAspectRatio="none"><g fill="none" stroke="#b9b9b9" stroke-width="2.6" stroke-linecap="round" stroke-linejoin="round"><path d="M1.8 21 V3.8 a2.5 2.5 0 0 1 2.5 -2.5 H18.5"/><rect x="6.6" y="6.3" width="17.4" height="21.8" rx="2.8"/></g></svg>
<div style="position:absolute;left:839.6px;top:1112.9px;width:111.79999999999995px;height:40.0px;background:#242424;border-radius:12px;"></div>
<div class="t" style="left:847.80px;top:1118.00px;font-size:29px;line-height:29px;color:#b9b9b9;font-weight:400;letter-spacing:-0.034px;">remasc</div>
<div style="position:absolute;left:1054.3px;top:1112.9px;width:266.4000000000001px;height:40.0px;background:#242424;border-radius:12px;"></div>
<div class="t" style="left:1062.50px;top:1118.00px;font-size:29px;line-height:29px;color:#b9b9b9;font-weight:400;letter-spacing:-0.220px;">processMinersFees</div>
<div style="position:absolute;left:1416.9px;top:1112.9px;width:124.0px;height:40.0px;background:#2e531c;border-radius:12px;"></div>
<div class="t" style="left:1425.00px;top:1118.00px;font-size:29px;line-height:29px;color:#eef2dd;font-weight:400;letter-spacing:-0.350px;">Success</div>
<div class="t" style="left:1713.60px;top:1118.00px;font-size:29px;line-height:29px;color:#8f7cf8;font-weight:400;letter-spacing:0.338px;">7479800</div>
<div class="t" style="left:1930.05px;top:1118.00px;font-size:29px;line-height:29px;color:#b9b9b9;font-weight:400;letter-spacing:0.000px;transform:scaleX(1.0548);transform-origin:0 0;">2026-03-23 20:26:40</div>
<div class="t" style="left:2257.25px;top:1118.00px;font-size:29px;line-height:29px;color:#8f7cf8;font-weight:400;letter-spacing:0.000px;transform:scaleX(1.1982);transform-origin:0 0;">0x00</div>
<div class="t" style="left:2339.25px;top:1118.00px;font-size:29px;line-height:29px;color:#8f7cf8;font-weight:400;letter-spacing:-2.707px;">...</div>
<div class="t" style="left:2364.58px;top:1118.00px;font-size:29px;line-height:29px;color:#8f7cf8;font-weight:400;letter-spacing:0.000px;transform:scaleX(1.1669);transform-origin:0 0;">0000</div>
<svg style="position:absolute;left:2451.5499999999997px;top:1118.2px;" width="25.40000000000009" height="29.40000000000009" viewBox="0 0 25.4 29.4" preserveAspectRatio="none"><g fill="none" stroke="#b9b9b9" stroke-width="2.6" stroke-linecap="round" stroke-linejoin="round"><path d="M1.8 21 V3.8 a2.5 2.5 0 0 1 2.5 -2.5 H18.5"/><rect x="6.6" y="6.3" width="17.4" height="21.8" rx="2.8"/></g></svg>
<svg style="position:absolute;left:2551px;top:1125.0px;" width="32.5" height="16.5" viewBox="0 0 32.5 16.5" preserveAspectRatio="none"><g fill="none" stroke="#b9b9b9" stroke-width="2.6" stroke-linecap="round" stroke-linejoin="round"><path d="M1.3 8.3 H31"/><path d="M24 1.3 L31.2 8.3 L24 15.3"/></g></svg>
<div class="t" style="left:2645.82px;top:1118.00px;font-size:29px;line-height:29px;color:#8f7cf8;font-weight:400;letter-spacing:0.000px;transform:scaleX(1.1776);transform-origin:0 0;">0x00</div>
<div class="t" style="left:2726.55px;top:1118.00px;font-size:29px;line-height:29px;color:#8f7cf8;font-weight:400;letter-spacing:-2.707px;">...</div>
<div class="t" style="left:2751.90px;top:1118.00px;font-size:29px;line-height:29px;color:#8f7cf8;font-weight:400;letter-spacing:0.000px;transform:scaleX(1.1469);transform-origin:0 0;">0008</div>
<svg style="position:absolute;left:2837.6px;top:1118.2px;" width="25.40000000000009" height="29.40000000000009" viewBox="0 0 25.4 29.4" preserveAspectRatio="none"><g fill="none" stroke="#b9b9b9" stroke-width="2.6" stroke-linecap="round" stroke-linejoin="round"><path d="M1.8 21 V3.8 a2.5 2.5 0 0 1 2.5 -2.5 H18.5"/><rect x="6.6" y="6.3" width="17.4" height="21.8" rx="2.8"/></g></svg>
<div class="t" style="left:3043.80px;top:1118.00px;font-size:29px;line-height:29px;color:#b9b9b9;font-weight:400;letter-spacing:0.000px;">0</div>
<div class="t" style="left:3336.00px;top:1118.00px;font-size:29px;line-height:29px;color:#b9b9b9;font-weight:400;letter-spacing:0.000px;">0</div>
<div class="t" style="left:3627.80px;top:1118.00px;font-size:29px;line-height:29px;color:#b9b9b9;font-weight:400;letter-spacing:0.000px;">0</div>
<div style="position:absolute;left:458px;top:1300px;width:3323.7px;height:2px;background:#3d3d3d;border-radius:0px;"></div>
<div class="t" style="left:503.08px;top:1230.00px;font-size:29px;line-height:29px;color:#8f7cf8;font-weight:400;letter-spacing:0.000px;transform:scaleX(1.0665);transform-origin:0 0;">0xef</div>
<div class="t" style="left:570.55px;top:1230.00px;font-size:29px;line-height:29px;color:#8f7cf8;font-weight:400;letter-spacing:-2.707px;">...</div>
<div class="t" style="left:595.97px;top:1230.00px;font-size:29px;line-height:29px;color:#8f7cf8;font-weight:400;letter-spacing:0.000px;transform:scaleX(1.0752);transform-origin:0 0;">df30</div>
<svg style="position:absolute;left:668.45px;top:1230.2px;" width="25.399999999999977" height="29.40000000000009" viewBox="0 0 25.4 29.4" preserveAspectRatio="none"><g fill="none" stroke="#b9b9b9" stroke-width="2.6" stroke-linecap="round" stroke-linejoin="round"><path d="M1.8 21 V3.8 a2.5 2.5 0 0 1 2.5 -2.5 H18.5"/><rect x="6.6" y="6.3" width="17.4" height="21.8" rx="2.8"/></g></svg>
<div style="position:absolute;left:839.6px;top:1224.9px;width:111.79999999999995px;height:40.0px;background:#242424;border-radius:12px;"></div>
<div class="t" style="left:847.80px;top:1230.00px;font-size:29px;line-height:29px;color:#b9b9b9;font-weight:400;letter-spacing:-0.034px;">remasc</div>
<div style="position:absolute;left:1054.3px;top:1224.9px;width:266.4000000000001px;height:40.0px;background:#242424;border-radius:12px;"></div>
<div class="t" style="left:1062.50px;top:1230.00px;font-size:29px;line-height:29px;color:#b9b9b9;font-weight:400;letter-spacing:-0.220px;">processMinersFees</div>
<div style="position:absolute;left:1416.9px;top:1224.9px;width:124.0px;height:40.0px;background:#2e531c;border-radius:12px;"></div>
<div class="t" style="left:1425.00px;top:1230.00px;font-size:29px;line-height:29px;color:#eef2dd;font-weight:400;letter-spacing:-0.350px;">Success</div>
<div class="t" style="left:1713.60px;top:1230.00px;font-size:29px;line-height:29px;color:#8f7cf8;font-weight:400;letter-spacing:0.338px;">7479799</div>
<div class="t" style="left:1930.05px;top:1230.00px;font-size:29px;line-height:29px;color:#b9b9b9;font-weight:400;letter-spacing:0.000px;transform:scaleX(1.0548);transform-origin:0 0;">2026-03-23 20:26:09</div>
<div class="t" style="left:2257.25px;top:1230.00px;font-size:29px;line-height:29px;color:#8f7cf8;font-weight:400;letter-spacing:0.000px;transform:scaleX(1.1982);transform-origin:0 0;">0x00</div>
<div class="t" style="left:2339.25px;top:1230.00px;font-size:29px;line-height:29px;color:#8f7cf8;font-weight:400;letter-spacing:-2.707px;">...</div>
<div class="t" style="left:2364.58px;top:1230.00px;font-size:29px;line-height:29px;color:#8f7cf8;font-weight:400;letter-spacing:0.000px;transform:scaleX(1.1669);transform-origin:0 0;">0000</div>
<svg style="position:absolute;left:2451.5499999999997px;top:1230.2px;" width="25.40000000000009" height="29.40000000000009" viewBox="0 0 25.4 29.4" preserveAspectRatio="none"><g fill="none" stroke="#b9b9b9" stroke-width="2.6" stroke-linecap="round" stroke-linejoin="round"><path d="M1.8 21 V3.8 a2.5 2.5 0 0 1 2.5 -2.5 H18.5"/><rect x="6.6" y="6.3" width="17.4" height="21.8" rx="2.8"/></g></svg>
<svg style="position:absolute;left:2551px;top:1237.0px;" width="32.5" height="16.5" viewBox="0 0 32.5 16.5" preserveAspectRatio="none"><g fill="none" stroke="#b9b9b9" stroke-width="2.6" stroke-linecap="round" stroke-linejoin="round"><path d="M1.3 8.3 H31"/><path d="M24 1.3 L31.2 8.3 L24 15.3"/></g></svg>
<div class="t" style="left:2645.82px;top:1230.00px;font-size:29px;line-height:29px;color:#8f7cf8;font-weight:400;letter-spacing:0.000px;transform:scaleX(1.1776);transform-origin:0 0;">0x00</div>
<div class="t" style="left:2726.55px;top:1230.00px;font-size:29px;line-height:29px;color:#8f7cf8;font-weight:400;letter-spacing:-2.707px;">...</div>
<div class="t" style="left:2751.90px;top:1230.00px;font-size:29px;line-height:29px;color:#8f7cf8;font-weight:400;letter-spacing:0.000px;transform:scaleX(1.1469);transform-origin:0 0;">0008</div>
<svg style="position:absolute;left:2837.6px;top:1230.2px;" width="25.40000000000009" height="29.40000000000009" viewBox="0 0 25.4 29.4" preserveAspectRatio="none"><g fill="none" stroke="#b9b9b9" stroke-width="2.6" stroke-linecap="round" stroke-linejoin="round"><path d="M1.8 21 V3.8 a2.5 2.5 0 0 1 2.5 -2.5 H18.5"/><rect x="6.6" y="6.3" width="17.4" height="21.8" rx="2.8"/></g></svg>
<div class="t" style="left:3043.80px;top:1230.00px;font-size:29px;line-height:29px;color:#b9b9b9;font-weight:400;letter-spacing:0.000px;">0</div>
<div class="t" style="left:3336.00px;top:1230.00px;font-size:29px;line-height:29px;color:#b9b9b9;font-weight:400;letter-spacing:0.000px;">0</div>
<div class="t" style="left:3627.80px;top:1230.00px;font-size:29px;line-height:29px;color:#b9b9b9;font-weight:400;letter-spacing:0.000px;">0</div>
<div style="position:absolute;left:458px;top:1412px;width:3323.7px;height:2px;background:#3d3d3d;border-radius:0px;"></div>
<div class="t" style="left:504.37px;top:1342.00px;font-size:29px;line-height:29px;color:#8f7cf8;font-weight:400;letter-spacing:0.000px;transform:scaleX(0.9760);transform-origin:0 0;">0x11</div>
<div class="t" style="left:570.55px;top:1342.00px;font-size:29px;line-height:29px;color:#8f7cf8;font-weight:400;letter-spacing:-2.707px;">...</div>
<div class="t" style="left:596.13px;top:1342.00px;font-size:29px;line-height:29px;color:#8f7cf8;font-weight:400;letter-spacing:0.000px;transform:scaleX(0.9169);transform-origin:0 0;">9adb</div>
<svg style="position:absolute;left:667.25px;top:1342.2px;" width="25.399999999999977" height="29.40000000000009" viewBox="0 0 25.4 29.4" preserveAspectRatio="none"><g fill="none" stroke="#b9b9b9" stroke-width="2.6" stroke-linecap="round" stroke-linejoin="round"><path d="M1.8 21 V3.8 a2.5 2.5 0 0 1 2.5 -2.5 H18.5"/><rect x="6.6" y="6.3" width="17.4" height="21.8" rx="2.8"/></g></svg>
<div style="position:absolute;left:839.6px;top:1336.9px;width:111.79999999999995px;height:40.0px;background:#242424;border-radius:12px;"></div>
<div class="t" style="left:847.80px;top:1342.00px;font-size:29px;line-height:29px;color:#b9b9b9;font-weight:400;letter-spacing:-0.034px;">remasc</div>
<div style="position:absolute;left:1054.3px;top:1336.9px;width:266.4000000000001px;height:40.0px;background:#242424;border-radius:12px;"></div>
<div class="t" style="left:1062.50px;top:1342.00px;font-size:29px;line-height:29px;color:#b9b9b9;font-weight:400;letter-spacing:-0.220px;">processMinersFees</div>
<div style="position:absolute;left:1416.9px;top:1336.9px;width:124.0px;height:40.0px;background:#2e531c;border-radius:12px;"></div>
<div class="t" style="left:1425.00px;top:1342.00px;font-size:29px;line-height:29px;color:#eef2dd;font-weight:400;letter-spacing:-0.350px;">Success</div>
<div class="t" style="left:1713.60px;top:1342.00px;font-size:29px;line-height:29px;color:#8f7cf8;font-weight:400;letter-spacing:0.338px;">7479798</div>
<div class="t" style="left:1930.05px;top:1342.00px;font-size:29px;line-height:29px;color:#b9b9b9;font-weight:400;letter-spacing:0.000px;transform:scaleX(1.0548);transform-origin:0 0;">2026-03-23 20:25:45</div>
<div class="t" style="left:2257.25px;top:1342.00px;font-size:29px;line-height:29px;color:#8f7cf8;font-weight:400;letter-spacing:0.000px;transform:scaleX(1.1982);transform-origin:0 0;">0x00</div>
<div class="t" style="left:2339.25px;top:1342.00px;font-size:29px;line-height:29px;color:#8f7cf8;font-weight:400;letter-spacing:-2.707px;">...</div>
<div class="t" style="left:2364.58px;top:1342.00px;font-size:29px;line-height:29px;color:#8f7cf8;font-weight:400;letter-spacing:0.000px;transform:scaleX(1.1669);transform-origin:0 0;">0000</div>
<svg style="position:absolute;left:2451.5499999999997px;top:1342.2px;" width="25.40000000000009" height="29.40000000000009" viewBox="0 0 25.4 29.4" preserveAspectRatio="none"><g fill="none" stroke="#b9b9b9" stroke-width="2.6" stroke-linecap="round" stroke-linejoin="round"><path d="M1.8 21 V3.8 a2.5 2.5 0 0 1 2.5 -2.5 H18.5"/><rect x="6.6" y="6.3" width="17.4" height="21.8" rx="2.8"/></g></svg>
<svg style="position:absolute;left:2551px;top:1349.0px;" width="32.5" height="16.5" viewBox="0 0 32.5 16.5" preserveAspectRatio="none"><g fill="none" stroke="#b9b9b9" stroke-width="2.6" stroke-linecap="round" stroke-linejoin="round"><path d="M1.3 8.3 H31"/><path d="M24 1.3 L31.2 8.3 L24 15.3"/></g></svg>
<div class="t" style="left:2645.82px;top:1342.00px;font-size:29px;line-height:29px;color:#8f7cf8;font-weight:400;letter-spacing:0.000px;transform:scaleX(1.1776);transform-origin:0 0;">0x00</div>
<div class="t" style="left:2726.55px;top:1342.00px;font-size:29px;line-height:29px;color:#8f7cf8;font-weight:400;letter-spacing:-2.707px;">...</div>
<div class="t" style="left:2751.90px;top:1342.00px;font-size:29px;line-height:29px;color:#8f7cf8;font-weight:400;letter-spacing:0.000px;transform:scaleX(1.1469);transform-origin:0 0;">0008</div>
<svg style="position:absolute;left:2837.6px;top:1342.2px;" width="25.40000000000009" height="29.40000000000009" viewBox="0 0 25.4 29.4" preserveAspectRatio="none"><g fill="none" stroke="#b9b9b9" stroke-width="2.6" stroke-linecap="round" stroke-linejoin="round"><path d="M1.8 21 V3.8 a2.5 2.5 0 0 1 2.5 -2.5 H18.5"/><rect x="6.6" y="6.3" width="17.4" height="21.8" rx="2.8"/></g></svg>
<div class="t" style="left:3043.80px;top:1342.00px;font-size:29px;line-height:29px;color:#b9b9b9;font-weight:400;letter-spacing:0.000px;">0</div>
<div class="t" style="left:3336.00px;top:1342.00px;font-size:29px;line-height:29px;color:#b9b9b9;font-weight:400;letter-spacing:0.000px;">0</div>
<div class="t" style="left:3627.80px;top:1342.00px;font-size:29px;line-height:29px;color:#b9b9b9;font-weight:400;letter-spacing:0.000px;">0</div>
<div style="position:absolute;left:458px;top:1524px;width:3323.7px;height:2px;background:#3d3d3d;border-radius:0px;"></div>
<div class="t" style="left:498.40px;top:1454.00px;font-size:29px;line-height:29px;color:#8f7cf8;font-weight:400;letter-spacing:0.131px;">0xba</div>
<div class="t" style="left:570.55px;top:1454.00px;font-size:29px;line-height:29px;color:#8f7cf8;font-weight:400;letter-spacing:-2.707px;">...</div>
<div class="t" style="left:597.05px;top:1454.00px;font-size:29px;line-height:29px;color:#8f7cf8;font-weight:400;letter-spacing:0.000px;transform:scaleX(0.9658);transform-origin:0 0;">4baa</div>
<svg style="position:absolute;left:673.2px;top:1454.2px;" width="25.399999999999977" height="29.40000000000009" viewBox="0 0 25.4 29.4" preserveAspectRatio="none"><g fill="none" stroke="#b9b9b9" stroke-width="2.6" stroke-linecap="round" stroke-linejoin="round"><path d="M1.8 21 V3.8 a2.5 2.5 0 0 1 2.5 -2.5 H18.5"/><rect x="6.6" y="6.3" width="17.4" height="21.8" rx="2.8"/></g></svg>
<div style="position:absolute;left:843.25px;top:1448.9px;width:104.5px;height:40.0px;background:#242424;border-radius:12px;"></div>
<div class="t" style="left:851.50px;top:1454.00px;font-size:29px;line-height:29px;color:#b9b9b9;font-weight:400;letter-spacing:-0.040px;">normal</div>
<div style="position:absolute;left:1416.9px;top:1448.9px;width:124.0px;height:40.0px;background:#2e531c;border-radius:12px;"></div>
<div class="t" style="left:1425.00px;top:1454.00px;font-size:29px;line-height:29px;color:#eef2dd;font-weight:400;letter-spacing:-0.350px;">Success</div>
<div class="t" style="left:1713.60px;top:1454.00px;font-size:29px;line-height:29px;color:#8f7cf8;font-weight:400;letter-spacing:0.338px;">7479798</div>
<div class="t" style="left:1930.05px;top:1454.00px;font-size:29px;line-height:29px;color:#b9b9b9;font-weight:400;letter-spacing:0.000px;transform:scaleX(1.0548);transform-origin:0 0;">2026-03-23 20:25:45</div>
<div class="t" style="left:2265.59px;top:1454.00px;font-size:29px;line-height:29px;color:#8f7cf8;font-weight:400;letter-spacing:0.000px;transform:scaleX(1.0633);transform-origin:0 0;">0xd0</div>
<div class="t" style="left:2339.25px;top:1454.00px;font-size:29px;line-height:29px;color:#8f7cf8;font-weight:400;letter-spacing:-2.707px;">...</div>
<div class="t" style="left:2364.71px;top:1454.00px;font-size:29px;line-height:29px;color:#8f7cf8;font-weight:400;letter-spacing:0.000px;transform:scaleX(1.0355);transform-origin:0 0;">9877</div>
<svg style="position:absolute;left:2443.3499999999995px;top:1454.2px;" width="25.40000000000009" height="29.40000000000009" viewBox="0 0 25.4 29.4" preserveAspectRatio="none"><g fill="none" stroke="#b9b9b9" stroke-width="2.6" stroke-linecap="round" stroke-linejoin="round"><path d="M1.8 21 V3.8 a2.5 2.5 0 0 1 2.5 -2.5 H18.5"/><rect x="6.6" y="6.3" width="17.4" height="21.8" rx="2.8"/></g></svg>
<svg style="position:absolute;left:2551px;top:1461.0px;" width="32.5" height="16.5" viewBox="0 0 32.5 16.5" preserveAspectRatio="none"><g fill="none" stroke="#b9b9b9" stroke-width="2.6" stroke-linecap="round" stroke-linejoin="round"><path d="M1.3 8.3 H31"/><path d="M24 1.3 L31.2 8.3 L24 15.3"/></g></svg>
<div class="t" style="left:2655.91px;top:1454.00px;font-size:29px;line-height:29px;color:#8f7cf8;font-weight:400;letter-spacing:0.000px;transform:scaleX(1.0924);transform-origin:0 0;">0xFf</div>
<div class="t" style="left:2726.55px;top:1454.00px;font-size:29px;line-height:29px;color:#8f7cf8;font-weight:400;letter-spacing:-2.707px;">...</div>
<div class="t" style="left:2752.13px;top:1454.00px;font-size:29px;line-height:29px;color:#8f7cf8;font-weight:400;letter-spacing:0.000px;transform:scaleX(0.9191);transform-origin:0 0;">6BcB</div>
<svg style="position:absolute;left:2827.6px;top:1454.2px;" width="25.40000000000009" height="29.40000000000009" viewBox="0 0 25.4 29.4" preserveAspectRatio="none"><g fill="none" stroke="#b9b9b9" stroke-width="2.6" stroke-linecap="round" stroke-linejoin="round"><path d="M1.8 21 V3.8 a2.5 2.5 0 0 1 2.5 -2.5 H18.5"/><rect x="6.6" y="6.3" width="17.4" height="21.8" rx="2.8"/></g></svg>
<div class="t" style="left:3043.80px;top:1454.00px;font-size:29px;line-height:29px;color:#b9b9b9;font-weight:400;letter-spacing:0.000px;">0</div>
<div class="t" style="left:3266.00px;top:1454.00px;font-size:29px;line-height:29px;color:#b9b9b9;font-weight:400;letter-spacing:0.324px;">0.00037691</div>
<div class="t" style="left:3574.93px;top:1454.00px;font-size:29px;line-height:29px;color:#b9b9b9;font-weight:400;letter-spacing:0.000px;transform:scaleX(0.9374);transform-origin:0 0;">1,932,896</div>
<div style="position:absolute;left:458px;top:1636px;width:3323.7px;height:2px;background:#3d3d3d;border-radius:0px;"></div>
<div class="t" style="left:500.25px;top:1566.00px;font-size:29px;line-height:29px;color:#8f7cf8;font-weight:400;letter-spacing:-0.152px;">0x34</div>
<div class="t" style="left:570.55px;top:1566.00px;font-size:29px;line-height:29px;color:#8f7cf8;font-weight:400;letter-spacing:-2.707px;">...</div>
<div class="t" style="left:597.05px;top:1566.00px;font-size:29px;line-height:29px;color:#8f7cf8;font-weight:400;letter-spacing:0.000px;transform:scaleX(1.0885);transform-origin:0 0;">48f4</div>
<svg style="position:absolute;left:671.35px;top:1566.2px;" width="25.399999999999977" height="29.40000000000009" viewBox="0 0 25.4 29.4" preserveAspectRatio="none"><g fill="none" stroke="#b9b9b9" stroke-width="2.6" stroke-linecap="round" stroke-linejoin="round"><path d="M1.8 21 V3.8 a2.5 2.5 0 0 1 2.5 -2.5 H18.5"/><rect x="6.6" y="6.3" width="17.4" height="21.8" rx="2.8"/></g></svg>
<div style="position:absolute;left:839.6px;top:1560.9px;width:111.79999999999995px;height:40.0px;background:#242424;border-radius:12px;"></div>
<div class="t" style="left:847.80px;top:1566.00px;font-size:29px;line-height:29px;color:#b9b9b9;font-weight:400;letter-spacing:-0.034px;">remasc</div>
<div style="position:absolute;left:1054.3px;top:1560.9px;width:266.4000000000001px;height:40.0px;background:#242424;border-radius:12px;"></div>
<div class="t" style="left:1062.50px;top:1566.00px;font-size:29px;line-height:29px;color:#b9b9b9;font-weight:400;letter-spacing:-0.220px;">processMinersFees</div>
<div style="position:absolute;left:1416.9px;top:1560.9px;width:124.0px;height:40.0px;background:#2e531c;border-radius:12px;"></div>
<div class="t" style="left:1425.00px;top:1566.00px;font-size:29px;line-height:29px;color:#eef2dd;font-weight:400;letter-spacing:-0.350px;">Success</div>
<div class="t" style="left:1713.60px;top:1566.00px;font-size:29px;line-height:29px;color:#8f7cf8;font-weight:400;letter-spacing:0.338px;">7479797</div>
<div class="t" style="left:1930.05px;top:1566.00px;font-size:29px;line-height:29px;color:#b9b9b9;font-weight:400;letter-spacing:0.000px;transform:scaleX(1.0548);transform-origin:0 0;">2026-03-23 20:24:48</div>
<div class="t" style="left:2257.25px;top:1566.00px;font-size:29px;line-height:29px;color:#8f7cf8;font-weight:400;letter-spacing:0.000px;transform:scaleX(1.1982);transform-origin:0 0;">0x00</div>
<div class="t" style="left:2339.25px;top:1566.00px;font-size:29px;line-height:29px;color:#8f7cf8;font-weight:400;letter-spacing:-2.707px;">...</div>
<div class="t" style="left:2364.58px;top:1566.00px;font-size:29px;line-height:29px;color:#8f7cf8;font-weight:400;letter-spacing:0.000px;transform:scaleX(1.1669);transform-origin:0 0;">0000</div>
<svg style="position:absolute;left:2451.5499999999997px;top:1566.2px;" width="25.40000000000009" height="29.40000000000009" viewBox="0 0 25.4 29.4" preserveAspectRatio="none"><g fill="none" stroke="#b9b9b9" stroke-width="2.6" stroke-linecap="round" stroke-linejoin="round"><path d="M1.8 21 V3.8 a2.5 2.5 0 0 1 2.5 -2.5 H18.5"/><rect x="6.6" y="6.3" width="17.4" height="21.8" rx="2.8"/></g></svg>
<svg style="position:absolute;left:2551px;top:1573.0px;" width="32.5" height="16.5" viewBox="0 0 32.5 16.5" preserveAspectRatio="none"><g fill="none" stroke="#b9b9b9" stroke-width="2.6" stroke-linecap="round" stroke-linejoin="round"><path d="M1.3 8.3 H31"/><path d="M24 1.3 L31.2 8.3 L24 15.3"/></g></svg>
<div class="t" style="left:2645.82px;top:1566.00px;font-size:29px;line-height:29px;color:#8f7cf8;font-weight:400;letter-spacing:0.000px;transform:scaleX(1.1776);transform-origin:0 0;">0x00</div>
<div class="t" style="left:2726.55px;top:1566.00px;font-size:29px;line-height:29px;color:#8f7cf8;font-weight:400;letter-spacing:-2.707px;">...</div>
<div class="t" style="left:2751.90px;top:1566.00px;font-size:29px;line-height:29px;color:#8f7cf8;font-weight:400;letter-spacing:0.000px;transform:scaleX(1.1469);transform-origin:0 0;">0008</div>
<svg style="position:absolute;left:2837.6px;top:1566.2px;" width="25.40000000000009" height="29.40000000000009" viewBox="0 0 25.4 29.4" preserveAspectRatio="none"><g fill="none" stroke="#b9b9b9" stroke-width="2.6" stroke-linecap="round" stroke-linejoin="round"><path d="M1.8 21 V3.8 a2.5 2.5 0 0 1 2.5 -2.5 H18.5"/><rect x="6.6" y="6.3" width="17.4" height="21.8" rx="2.8"/></g></svg>
<div class="t" style="left:3043.80px;top:1566.00px;font-size:29px;line-height:29px;color:#b9b9b9;font-weight:400;letter-spacing:0.000px;">0</div>
<div class="t" style="left:3336.00px;top:1566.00px;font-size:29px;line-height:29px;color:#b9b9b9;font-weight:400;letter-spacing:0.000px;">0</div>
<div class="t" style="left:3627.80px;top:1566.00px;font-size:29px;line-height:29px;color:#b9b9b9;font-weight:400;letter-spacing:0.000px;">0</div>
<div style="position:absolute;left:458px;top:1748px;width:3323.7px;height:2px;background:#3d3d3d;border-radius:0px;"></div>
<div class="t" style="left:497.42px;top:1678.00px;font-size:29px;line-height:29px;color:#8f7cf8;font-weight:400;letter-spacing:0.000px;transform:scaleX(1.0832);transform-origin:0 0;">0xcd</div>
<div class="t" style="left:570.55px;top:1678.00px;font-size:29px;line-height:29px;color:#8f7cf8;font-weight:400;letter-spacing:-2.707px;">...</div>
<div class="t" style="left:596.02px;top:1678.00px;font-size:29px;line-height:29px;color:#8f7cf8;font-weight:400;letter-spacing:0.000px;transform:scaleX(1.0267);transform-origin:0 0;">d447</div>
<svg style="position:absolute;left:674.1px;top:1678.2px;" width="25.399999999999977" height="29.40000000000009" viewBox="0 0 25.4 29.4" preserveAspectRatio="none"><g fill="none" stroke="#b9b9b9" stroke-width="2.6" stroke-linecap="round" stroke-linejoin="round"><path d="M1.8 21 V3.8 a2.5 2.5 0 0 1 2.5 -2.5 H18.5"/><rect x="6.6" y="6.3" width="17.4" height="21.8" rx="2.8"/></g></svg>
<div style="position:absolute;left:807.0px;top:1672.9px;width:177.0px;height:40.0px;background:#242424;border-radius:12px;"></div>
<div class="t" style="left:814.96px;top:1678.00px;font-size:29px;line-height:29px;color:#b9b9b9;font-weight:400;letter-spacing:0.000px;transform:scaleX(1.0441);transform-origin:0 0;">contract call</div>
<div style="position:absolute;left:1093.85px;top:1672.9px;width:187.30000000000018px;height:40.0px;background:#242424;border-radius:12px;"></div>
<div class="t" style="left:1101.93px;top:1678.00px;font-size:29px;line-height:29px;color:#b9b9b9;font-weight:400;letter-spacing:0.000px;transform:scaleX(1.0728);transform-origin:0 0;">0x5a686699</div>
<div style="position:absolute;left:1416.9px;top:1672.9px;width:124.0px;height:40.0px;background:#2e531c;border-radius:12px;"></div>
<div class="t" style="left:1425.00px;top:1678.00px;font-size:29px;line-height:29px;color:#eef2dd;font-weight:400;letter-spacing:-0.350px;">Success</div>
<div class="t" style="left:1713.60px;top:1678.00px;font-size:29px;line-height:29px;color:#8f7cf8;font-weight:400;letter-spacing:0.338px;">7479797</div>
<div class="t" style="left:1930.05px;top:1678.00px;font-size:29px;line-height:29px;color:#b9b9b9;font-weight:400;letter-spacing:0.000px;transform:scaleX(1.0548);transform-origin:0 0;">2026-03-23 20:24:48</div>
<div class="t" style="left:2264.80px;top:1678.00px;font-size:29px;line-height:29px;color:#8f7cf8;font-weight:400;letter-spacing:-0.040px;">0xC6</div>
<div class="t" style="left:2339.25px;top:1678.00px;font-size:29px;line-height:29px;color:#8f7cf8;font-weight:400;letter-spacing:-2.707px;">...</div>
<div class="t" style="left:2364.78px;top:1678.00px;font-size:29px;line-height:29px;color:#8f7cf8;font-weight:400;letter-spacing:0.000px;transform:scaleX(0.9682);transform-origin:0 0;">74Ba</div>
<svg style="position:absolute;left:2444.2px;top:1678.2px;" width="25.40000000000009" height="29.40000000000009" viewBox="0 0 25.4 29.4" preserveAspectRatio="none"><g fill="none" stroke="#b9b9b9" stroke-width="2.6" stroke-linecap="round" stroke-linejoin="round"><path d="M1.8 21 V3.8 a2.5 2.5 0 0 1 2.5 -2.5 H18.5"/><rect x="6.6" y="6.3" width="17.4" height="21.8" rx="2.8"/></g></svg>
<svg style="position:absolute;left:2551px;top:1685.0px;" width="32.5" height="16.5" viewBox="0 0 32.5 16.5" preserveAspectRatio="none"><g fill="none" stroke="#b9b9b9" stroke-width="2.6" stroke-linecap="round" stroke-linejoin="round"><path d="M1.3 8.3 H31"/><path d="M24 1.3 L31.2 8.3 L24 15.3"/></g></svg>
<div class="t" style="left:2655.90px;top:1678.00px;font-size:29px;line-height:29px;color:#8f7cf8;font-weight:400;letter-spacing:0.298px;">0x46</div>
<div class="t" style="left:2726.55px;top:1678.00px;font-size:29px;line-height:29px;color:#8f7cf8;font-weight:400;letter-spacing:-2.707px;">...</div>
<div class="t" style="left:2753.05px;top:1678.00px;font-size:29px;line-height:29px;color:#8f7cf8;font-weight:400;letter-spacing:0.000px;transform:scaleX(1.0757);transform-origin:0 0;">f48a</div>
<svg style="position:absolute;left:2827.7000000000003px;top:1678.2px;" width="25.40000000000009" height="29.40000000000009" viewBox="0 0 25.4 29.4" preserveAspectRatio="none"><g fill="none" stroke="#b9b9b9" stroke-width="2.6" stroke-linecap="round" stroke-linejoin="round"><path d="M1.8 21 V3.8 a2.5 2.5 0 0 1 2.5 -2.5 H18.5"/><rect x="6.6" y="6.3" width="17.4" height="21.8" rx="2.8"/></g></svg>
<div class="t" style="left:3043.80px;top:1678.00px;font-size:29px;line-height:29px;color:#b9b9b9;font-weight:400;letter-spacing:0.000px;">0</div>
<div class="t" style="left:3256.36px;top:1678.00px;font-size:29px;line-height:29px;color:#b9b9b9;font-weight:400;letter-spacing:0.000px;transform:scaleX(1.1375);transform-origin:0 0;">0.00000044</div>
<div class="t" style="left:3589.76px;top:1678.00px;font-size:29px;line-height:29px;color:#b9b9b9;font-weight:400;letter-spacing:0.000px;transform:scaleX(1.0396);transform-origin:0 0;">59,969</div>
<div style="position:absolute;left:458px;top:1860px;width:3323.7px;height:2px;background:#3d3d3d;border-radius:0px;"></div>
<div class="t" style="left:498.56px;top:1790.00px;font-size:29px;line-height:29px;color:#8f7cf8;font-weight:400;letter-spacing:0.000px;transform:scaleX(1.0361);transform-origin:0 0;">0xa7</div>
<div class="t" style="left:570.55px;top:1790.00px;font-size:29px;line-height:29px;color:#8f7cf8;font-weight:400;letter-spacing:-2.707px;">...</div>
<div class="t" style="left:596.05px;top:1790.00px;font-size:29px;line-height:29px;color:#8f7cf8;font-weight:400;letter-spacing:0.188px;">28d9</div>
<svg style="position:absolute;left:673.0px;top:1790.2px;" width="25.399999999999977" height="29.40000000000009" viewBox="0 0 25.4 29.4" preserveAspectRatio="none"><g fill="none" stroke="#b9b9b9" stroke-width="2.6" stroke-linecap="round" stroke-linejoin="round"><path d="M1.8 21 V3.8 a2.5 2.5 0 0 1 2.5 -2.5 H18.5"/><rect x="6.6" y="6.3" width="17.4" height="21.8" rx="2.8"/></g></svg>
<div style="position:absolute;left:843.25px;top:1784.9px;width:104.5px;height:40.0px;background:#242424;border-radius:12px;"></div>
<div class="t" style="left:851.50px;top:1790.00px;font-size:29px;line-height:29px;color:#b9b9b9;font-weight:400;letter-spacing:-0.040px;">normal</div>
<div style="position:absolute;left:1416.9px;top:1784.9px;width:124.0px;height:40.0px;background:#2e531c;border-radius:12px;"></div>
<div class="t" style="left:1425.00px;top:1790.00px;font-size:29px;line-height:29px;color:#eef2dd;font-weight:400;letter-spacing:-0.350px;">Success</div>
<div class="t" style="left:1713.60px;top:1790.00px;font-size:29px;line-height:29px;color:#8f7cf8;font-weight:400;letter-spacing:0.338px;">7479797</div>
<div class="t" style="left:1930.05px;top:1790.00px;font-size:29px;line-height:29px;color:#b9b9b9;font-weight:400;letter-spacing:0.000px;transform:scaleX(1.0548);transform-origin:0 0;">2026-03-23 20:24:48</div>
<div class="t" style="left:2265.59px;top:1790.00px;font-size:29px;line-height:29px;color:#8f7cf8;font-weight:400;letter-spacing:0.000px;transform:scaleX(1.0633);transform-origin:0 0;">0xd0</div>
<div class="t" style="left:2339.25px;top:1790.00px;font-size:29px;line-height:29px;color:#8f7cf8;font-weight:400;letter-spacing:-2.707px;">...</div>
<div class="t" style="left:2364.71px;top:1790.00px;font-size:29px;line-height:29px;color:#8f7cf8;font-weight:400;letter-spacing:0.000px;transform:scaleX(1.0355);transform-origin:0 0;">9877</div>
<svg style="position:absolute;left:2443.3499999999995px;top:1790.2px;" width="25.40000000000009" height="29.40000000000009" viewBox="0 0 25.4 29.4" preserveAspectRatio="none"><g fill="none" stroke="#b9b9b9" stroke-width="2.6" stroke-linecap="round" stroke-linejoin="round"><path d="M1.8 21 V3.8 a2.5 2.5 0 0 1 2.5 -2.5 H18.5"/><rect x="6.6" y="6.3" width="17.4" height="21.8" rx="2.8"/></g></svg>
<svg style="position:absolute;left:2551px;top:1797.0px;" width="32.5" height="16.5" viewBox="0 0 32.5 16.5" preserveAspectRatio="none"><g fill="none" stroke="#b9b9b9" stroke-width="2.6" stroke-linecap="round" stroke-linejoin="round"><path d="M1.3 8.3 H31"/><path d="M24 1.3 L31.2 8.3 L24 15.3"/></g></svg>
<div class="t" style="left:2655.91px;top:1790.00px;font-size:29px;line-height:29px;color:#8f7cf8;font-weight:400;letter-spacing:0.000px;transform:scaleX(1.0924);transform-origin:0 0;">0xFf</div>
<div class="t" style="left:2726.55px;top:1790.00px;font-size:29px;line-height:29px;color:#8f7cf8;font-weight:400;letter-spacing:-2.707px;">...</div>
<div class="t" style="left:2752.13px;top:1790.00px;font-size:29px;line-height:29px;color:#8f7cf8;font-weight:400;letter-spacing:0.000px;transform:scaleX(0.9191);transform-origin:0 0;">6BcB</div>
<svg style="position:absolute;left:2827.6px;top:1790.2px;" width="25.40000000000009" height="29.40000000000009" viewBox="0 0 25.4 29.4" preserveAspectRatio="none"><g fill="none" stroke="#b9b9b9" stroke-width="2.6" stroke-linecap="round" stroke-linejoin="round"><path d="M1.8 21 V3.8 a2.5 2.5 0 0 1 2.5 -2.5 H18.5"/><rect x="6.6" y="6.3" width="17.4" height="21.8" rx="2.8"/></g></svg>
<div class="t" style="left:3043.80px;top:1790.00px;font-size:29px;line-height:29px;color:#b9b9b9;font-weight:400;letter-spacing:0.000px;">0</div>
<div class="t" style="left:3261.93px;top:1790.00px;font-size:29px;line-height:29px;color:#b9b9b9;font-weight:400;letter-spacing:0.000px;transform:scaleX(1.0722);transform-origin:0 0;">0.00037686</div>
<div class="t" style="left:3574.93px;top:1790.00px;font-size:29px;line-height:29px;color:#b9b9b9;font-weight:400;letter-spacing:0.000px;transform:scaleX(0.9374);transform-origin:0 0;">1,932,592</div>
<div class="t" style="left:503.04px;top:1902.00px;font-size:29px;line-height:29px;color:#8f7cf8;font-weight:400;letter-spacing:0.000px;transform:scaleX(0.9637);transform-origin:0 0;">0x0d</div>
<div class="t" style="left:570.55px;top:1902.00px;font-size:29px;line-height:29px;color:#8f7cf8;font-weight:400;letter-spacing:-2.707px;">...</div>
<div class="t" style="left:597.05px;top:1902.00px;font-size:29px;line-height:29px;color:#8f7cf8;font-weight:400;letter-spacing:0.000px;transform:scaleX(1.0585);transform-origin:0 0;">fe91</div>
<svg style="position:absolute;left:668.6px;top:1902.2px;" width="25.399999999999977" height="29.40000000000009" viewBox="0 0 25.4 29.4" preserveAspectRatio="none"><g fill="none" stroke="#b9b9b9" stroke-width="2.6" stroke-linecap="round" stroke-linejoin="round"><path d="M1.8 21 V3.8 a2.5 2.5 0 0 1 2.5 -2.5 H18.5"/><rect x="6.6" y="6.3" width="17.4" height="21.8" rx="2.8"/></g></svg>
<div style="position:absolute;left:839.6px;top:1896.9px;width:111.79999999999995px;height:40.0px;background:#242424;border-radius:12px;"></div>
<div class="t" style="left:847.80px;top:1902.00px;font-size:29px;line-height:29px;color:#b9b9b9;font-weight:400;letter-spacing:-0.034px;">remasc</div>
<div style="position:absolute;left:1054.3px;top:1896.9px;width:266.4000000000001px;height:40.0px;background:#242424;border-radius:12px;"></div>
<div class="t" style="left:1062.50px;top:1902.00px;font-size:29px;line-height:29px;color:#b9b9b9;font-weight:400;letter-spacing:-0.220px;">processMinersFees</div>
<div style="position:absolute;left:1416.9px;top:1896.9px;width:124.0px;height:40.0px;background:#2e531c;border-radius:12px;"></div>
<div class="t" style="left:1425.00px;top:1902.00px;font-size:29px;line-height:29px;color:#eef2dd;font-weight:400;letter-spacing:-0.350px;">Success</div>
<div class="t" style="left:1713.60px;top:1902.00px;font-size:29px;line-height:29px;color:#8f7cf8;font-weight:400;letter-spacing:0.338px;">7479796</div>
<div class="t" style="left:1930.05px;top:1902.00px;font-size:29px;line-height:29px;color:#b9b9b9;font-weight:400;letter-spacing:0.000px;transform:scaleX(1.0548);transform-origin:0 0;">2026-03-23 20:24:18</div>
<div class="t" style="left:2257.25px;top:1902.00px;font-size:29px;line-height:29px;color:#8f7cf8;font-weight:400;letter-spacing:0.000px;transform:scaleX(1.1982);transform-origin:0 0;">0x00</div>
<div class="t" style="left:2339.25px;top:1902.00px;font-size:29px;line-height:29px;color:#8f7cf8;font-weight:400;letter-spacing:-2.707px;">...</div>
<div class="t" style="left:2364.58px;top:1902.00px;font-size:29px;line-height:29px;color:#8f7cf8;font-weight:400;letter-spacing:0.000px;transform:scaleX(1.1669);transform-origin:0 0;">0000</div>
<svg style="position:absolute;left:2451.5499999999997px;top:1902.2px;" width="25.40000000000009" height="29.40000000000009" viewBox="0 0 25.4 29.4" preserveAspectRatio="none"><g fill="none" stroke="#b9b9b9" stroke-width="2.6" stroke-linecap="round" stroke-linejoin="round"><path d="M1.8 21 V3.8 a2.5 2.5 0 0 1 2.5 -2.5 H18.5"/><rect x="6.6" y="6.3" width="17.4" height="21.8" rx="2.8"/></g></svg>
<svg style="position:absolute;left:2551px;top:1909.0px;" width="32.5" height="16.5" viewBox="0 0 32.5 16.5" preserveAspectRatio="none"><g fill="none" stroke="#b9b9b9" stroke-width="2.6" stroke-linecap="round" stroke-linejoin="round"><path d="M1.3 8.3 H31"/><path d="M24 1.3 L31.2 8.3 L24 15.3"/></g></svg>
<div class="t" style="left:2645.82px;top:1902.00px;font-size:29px;line-height:29px;color:#8f7cf8;font-weight:400;letter-spacing:0.000px;transform:scaleX(1.1776);transform-origin:0 0;">0x00</div>
<div class="t" style="left:2726.55px;top:1902.00px;font-size:29px;line-height:29px;color:#8f7cf8;font-weight:400;letter-spacing:-2.707px;">...</div>
<div class="t" style="left:2751.90px;top:1902.00px;font-size:29px;line-height:29px;color:#8f7cf8;font-weight:400;letter-spacing:0.000px;transform:scaleX(1.1469);transform-origin:0 0;">0008</div>
<svg style="position:absolute;left:2837.6px;top:1902.2px;" width="25.40000000000009" height="29.40000000000009" viewBox="0 0 25.4 29.4" preserveAspectRatio="none"><g fill="none" stroke="#b9b9b9" stroke-width="2.6" stroke-linecap="round" stroke-linejoin="round"><path d="M1.8 21 V3.8 a2.5 2.5 0 0 1 2.5 -2.5 H18.5"/><rect x="6.6" y="6.3" width="17.4" height="21.8" rx="2.8"/></g></svg>
<div class="t" style="left:3043.80px;top:1902.00px;font-size:29px;line-height:29px;color:#b9b9b9;font-weight:400;letter-spacing:0.000px;">0</div>
<div class="t" style="left:3336.00px;top:1902.00px;font-size:29px;line-height:29px;color:#b9b9b9;font-weight:400;letter-spacing:0.000px;">0</div>
<div class="t" style="left:3627.80px;top:1902.00px;font-size:29px;line-height:29px;color:#b9b9b9;font-weight:400;letter-spacing:0.000px;">0</div>
<div style="position:absolute;left:2308px;top:723px;width:867.8px;height:326.6px;border-radius:14px;background:#262626;border:2px solid #3b3b3b;box-sizing:border-box"></div>
<div class="t" style="left:2340.80px;top:755.00px;font-size:29px;line-height:29px;color:#a9a9a9;font-weight:400;letter-spacing:-0.100px;">From Address</div>
<div style="position:absolute;left:2342.8px;top:817.8px;width:160.2px;height:69.9px;border-radius:14px;background:#141414;border:2px solid #353535;box-sizing:border-box"></div>
<div class="t" style="left:2354.65px;top:837.70px;font-size:29px;line-height:29px;color:#fafafa;font-weight:400;letter-spacing:0.000px;transform:scaleX(1.0267);transform-origin:0 0;-webkit-text-stroke:0.45px currentColor;">Include</div>
<svg style="position:absolute;left:2464.3px;top:847.7px;" width="22.09999999999991" height="12.799999999999955" viewBox="0 0 22.1 12.8" preserveAspectRatio="none"><path d="M1.3 1.3 L11 11.5 L20.8 1.3" fill="none" stroke="#fafafa" stroke-width="2.6" stroke-linecap="round" stroke-linejoin="round"/></svg>
<div style="position:absolute;left:2520.6px;top:817.8px;width:580.4px;height:69.9px;border-radius:18px;background:#141414;border:2px solid #353535;box-sizing:border-box"></div>
<div class="t" style="left:2539.00px;top:838.00px;font-size:29px;line-height:29px;color:#7d7d7d;font-weight:400;letter-spacing:-0.186px;">Address / 0x...</div>
<svg style="position:absolute;left:3056.3px;top:844.2px;" width="19.399999999999636" height="18.299999999999955" viewBox="0 0 19.4 18.3" preserveAspectRatio="none"><path d="M1.3 1.3 L18.1 17 M18.1 1.3 L1.3 17" fill="none" stroke="#a0a0a0" stroke-width="2.3" stroke-linecap="round" stroke-linejoin="round"/></svg>
<svg style="position:absolute;left:3117.6px;top:841px;" width="24.09999999999991" height="22.200000000000045" viewBox="0 0 24.1 22.2" preserveAspectRatio="none"><path d="M12 1.3 V21 M1.3 11.1 H22.8" fill="none" stroke="#a0a0a0" stroke-width="2.3" stroke-linecap="round" stroke-linejoin="round"/></svg>
<div class="t" style="left:2340.91px;top:982.90px;font-size:29px;line-height:29px;color:#6657a8;font-weight:400;letter-spacing:0.000px;transform:scaleX(0.9471);transform-origin:0 0;">Reset</div>
<div style="position:absolute;left:3018.2px;top:969.2px;width:123.5px;height:55.09999999999991px;background:#564a98;border-radius:14px;"></div>
<div class="t" style="left:3043.90px;top:982.90px;font-size:29px;line-height:29px;color:#17151f;font-weight:400;letter-spacing:0.014px;">Apply</div>
<div style="position:absolute;left:3746px;top:820.3px;width:90px;height:271.7px;border-radius:14px;background:#f29430"></div>
<div class="t" style="left:3783.5px;top:929px;font-size:32px;line-height:32px;color:#111;transform:translate(-50%,-50%) rotate(-90deg);letter-spacing:0px">Feedback</div>
<svg style="position:absolute;left:3768.2px;top:1022.3px;" width="31.600000000000364" height="28.200000000000045" viewBox="0 0 31.6 28.2" preserveAspectRatio="none"><path d="M0 1 H29 a2.6 2.6 0 0 1 2.6 2.6 V25.6 a2.6 2.6 0 0 1 -2.6 2.6 H6.5 a2.6 2.6 0 0 1 -2.6 -2.6 V6 Z" fill="#0b0800"/><circle cx="11.9" cy="10.7" r="2.1" fill="#f29430"/><circle cx="23.8" cy="10.7" r="2.1" fill="#f29430"/><path d="M10.6 16.4 Q18 24.5 25.2 15.8" fill="none" stroke="#f29430" stroke-width="3" stroke-linecap="round"/></svg>
<div style="position:absolute;left:0px;top:1918px;width:3816px;height:2px;background:#333333;border-radius:0px;"></div>
<svg style="position:absolute;left:0px;top:1870px;" width="50" height="50" viewBox="0 0 50 50" preserveAspectRatio="none"><path d="M0 0 V50 H50 V48.5 Q1 48.5 1 0 Z" fill="#1d2619"/><path d="M1 0 Q1 48.5 50 48.5" fill="none" stroke="#3a3a3a" stroke-width="2"/></svg>
</div></body></html>
